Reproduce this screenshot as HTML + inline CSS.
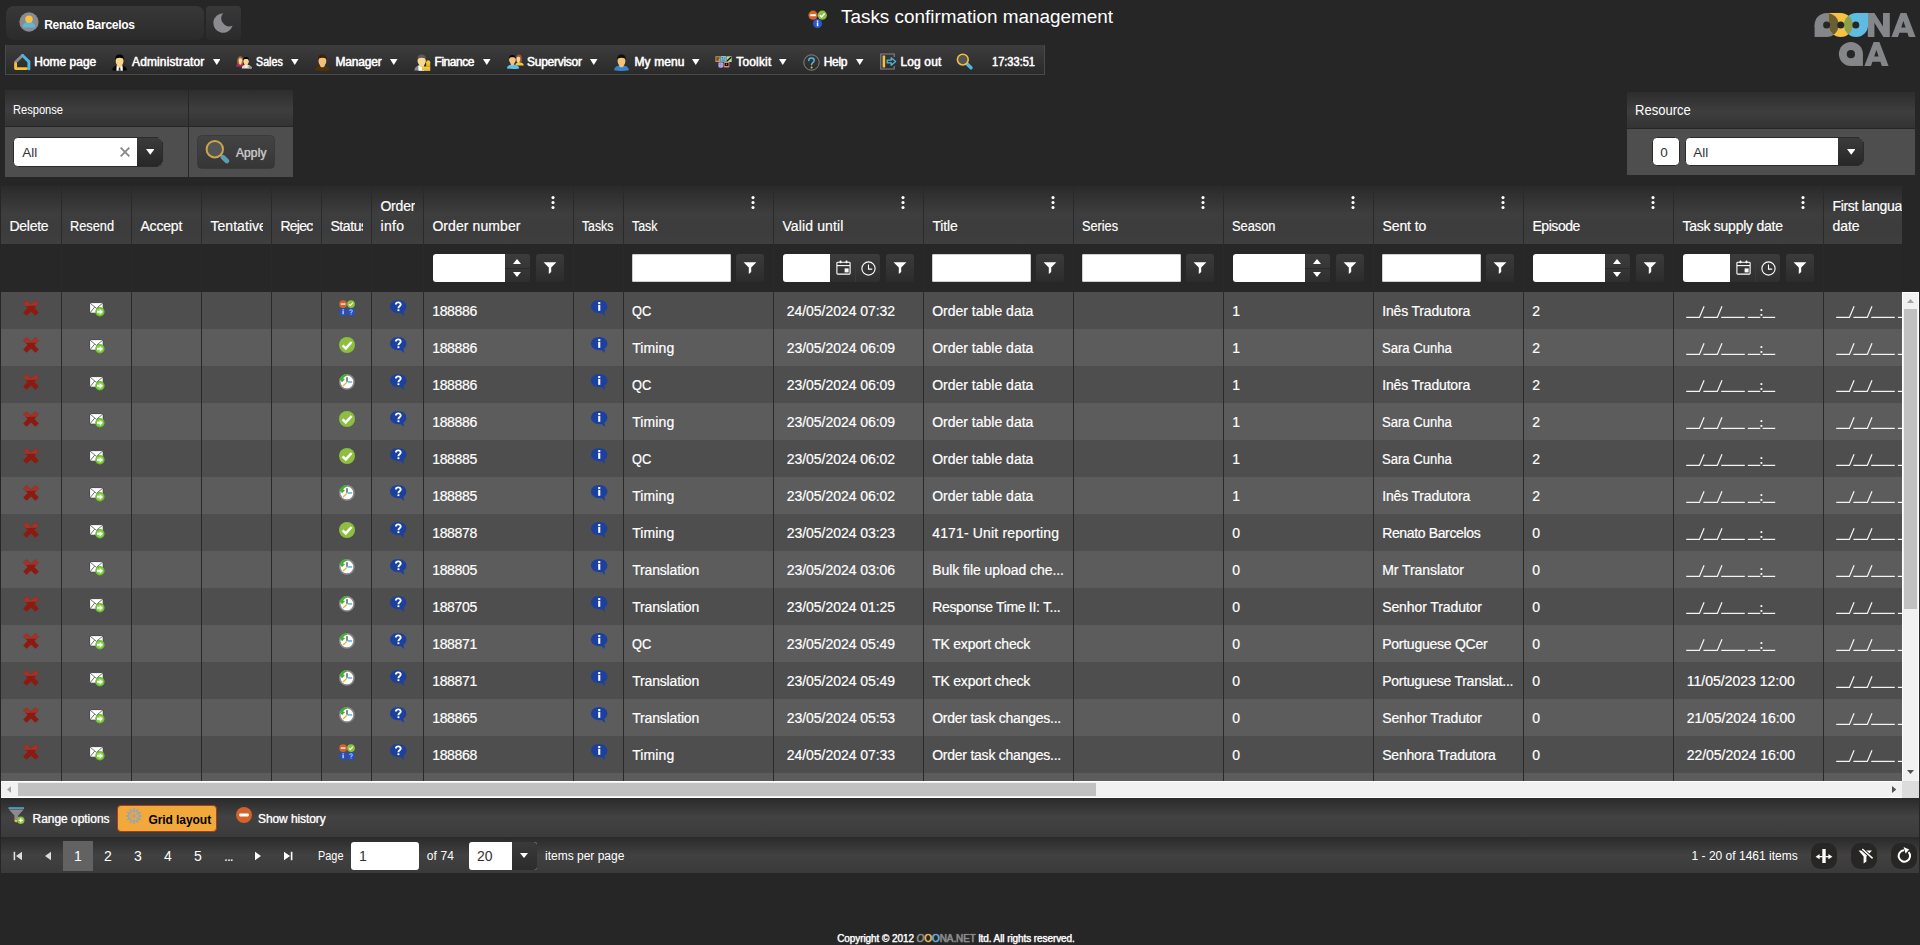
<!DOCTYPE html>
<html><head><meta charset="utf-8"><title>Tasks confirmation management</title>
<style>

*{box-sizing:border-box}
html,body{margin:0;padding:0}
body{width:1920px;height:945px;overflow:hidden;position:relative;background:#272626;color:#fff;font-family:"Liberation Sans",sans-serif;font-size:14px}
.abs{position:absolute}
svg{display:block}
.t{position:absolute;white-space:nowrap;line-height:1}
/* top */
#userbox{left:6px;top:6px;width:198px;height:34px;border-radius:8px;background:linear-gradient(#383838,#2b2b2b)}
#moonbox{left:206px;top:6px;width:35px;height:34px;border-radius:4px;background:linear-gradient(#383838,#2b2b2b)}
#menubar{left:5px;top:45px;width:1040px;height:30px;border:1px solid #4a4a4a;border-top-color:#3c3c3c;background:linear-gradient(#3c3c3c,#2a2a2a)}
#menubar .t{font-size:12px;top:10px;text-shadow:0 0 1px #fff}
#menubar .i{position:absolute}
/* panels */
.ph{position:absolute;background:linear-gradient(#2d2d2d 0%,#3e3e3e 55%,#333 100%)}
.pb{position:absolute;background:#4e4e4e}
.combo{position:absolute;height:29px;border-radius:4.5px;background:#fff;overflow:hidden;color:#333;border:1px solid #2b2b2b}
.combo .btn{position:absolute;right:0;top:0;bottom:0;background:linear-gradient(#3b3b3b,#272727)}
/* grid */
#grid{left:1px;top:186px;width:1918px;height:612px}
#ghead{left:0;top:0;width:1901px;height:58px;overflow:hidden;background:linear-gradient(#2a2a2a 0%,#3e3e3e 48%,#3c3c3c 75%,#3f3f3f 100%)}
#gfilter{left:0;top:58px;width:1901px;height:48px;background:#272727}
.hc{position:absolute;top:0;height:58px;border-left:1px solid #2a2a2a}
.fc{position:absolute;top:0;height:48px;border-left:1px solid #2a2a2a}
.hc .t{font-size:14px;-webkit-text-stroke:0.18px #fff}
.row{position:absolute;left:0;width:1901px;height:37px;background:#4e4e4e}
.row.alt{background:#5c5c5c}
.c{position:absolute;top:0;height:37px;border-left:1px solid #2a2a2a}
.c .t{top:11.5px;font-size:14px;color:#fff;-webkit-text-stroke:0.2px #fff}
.finp{position:absolute;top:10px;height:28px;background:#fff;border-radius:3px}
.finp.tx{border-radius:1px;border:1px solid #d0d0d0}
.fbtn{position:absolute;top:10px;width:28px;height:28px;border-radius:3px;background:linear-gradient(#3b3b3b,#2c2c2c)}
.fbtn svg{position:absolute;left:7px;top:7px}
.spin{position:absolute;top:10px;height:28px;background:linear-gradient(#3c3c3c,#2f2f2f);border-radius:0 3px 3px 0}

</style></head>
<body>
<div id="userbox" class="abs"></div>
<div class="abs" style="left:18.55px;top:11.5px;"><svg width="20" height="20" viewBox="0 0 20 20" ><circle cx="10" cy="10" r="9.65" fill="#8b8b8f"/>
<path d="M3.8 15.6 C3.8 12 6.4 10.3 8 10.3 L10 11.2 L12 10.3 C13.6 10.3 16.2 12 16.2 15.6 Z" fill="#5ab8e0"/>
<circle cx="10" cy="7.3" r="3.7" fill="#f8c440"/></svg></div>
<div class="t" style="left:44.2px;top:19px;font-size:12px;font-weight:bold;letter-spacing:-0.28px;">Renato Barcelos</div>
<div id="moonbox" class="abs"></div>
<div class="abs" style="left:212px;top:12px;"><svg width="22" height="22" viewBox="0 0 22 22" ><path d="M11.2 1.2 A9.8 9.8 0 1 0 20.6 13.6 A8 8 0 0 1 11.2 1.2 Z" fill="#8b8b90"/></svg></div>
<div class="abs" style="left:808px;top:10px;"><svg width="20" height="19" viewBox="0 0 20 19" ><circle cx="5" cy="5.2" r="4.6" fill="#d4622a"/><rect x="2.2" y="4.2" width="5.6" height="2" fill="#fff"/>
<circle cx="14.3" cy="5.2" r="4.6" fill="#8cc03f"/><path d="M11.9 5.3 l1.7 1.7 l3 -3.4" stroke="#fff" stroke-width="1.5" fill="none"/>
<circle cx="9.5" cy="13.6" r="4.6" fill="#2a56c6"/><rect x="8.8" y="12.4" width="1.5" height="3.8" fill="#fff"/><rect x="8.8" y="10.4" width="1.5" height="1.4" fill="#fff"/></svg></div>
<div class="t" style="left:841px;top:7.9px;font-size:18px;transform:scaleX(1.0498);transform-origin:0 0;">Tasks confirmation management</div>
<div class="abs" style="left:1814px;top:12px;"><svg width="106" height="58" viewBox="0 0 106 58" >
<defs><clipPath id="lg1"><circle cx="12.6" cy="12.95" r="12"/></clipPath><clipPath id="lg2"><circle cx="26.75" cy="12.95" r="12"/></clipPath></defs>
<g fill="#85868a">
<circle cx="12.6" cy="12.95" r="12"/><rect x="0.6" y="12.95" width="12" height="12"/>
<path d="M53.8 0.95 H60.4 L69 14.4 V0.95 H75.8 V24.95 H69.4 L60.4 10.8 V24.95 H53.8 Z"/>
<path d="M77.4 24.95 L86.6 0.95 H92.4 L101.6 24.95 H94.8 L93.4 20.8 H85.4 L84 24.95 Z M87.2 15.6 H91.6 L89.4 9 Z" fill-rule="evenodd"/>
<circle cx="36.9" cy="41.95" r="12"/><rect x="36.9" y="41.95" width="12" height="12"/>
<path d="M50.4 53.95 L59.6 29.95 H65.4 L74.6 53.95 H67.8 L66.4 49.8 H58.4 L57 53.95 Z M60.2 44.6 H64.6 L62.4 38 Z" fill-rule="evenodd"/>
</g>
<g fill="#f5c242"><circle cx="26.75" cy="12.95" r="12"/><rect x="14.75" y="0.95" width="12" height="12"/></g>
<g fill="#6b5e33" clip-path="url(#lg1)"><circle cx="26.75" cy="12.95" r="12"/><rect x="14.75" y="0.95" width="12" height="12"/></g>
<g fill="#5fbbe0"><circle cx="42.1" cy="12.95" r="12"/><rect x="42.1" y="0.95" width="12" height="12"/></g>
<circle cx="42.1" cy="12.95" r="12" fill="#8c9e4a" clip-path="url(#lg2)"/>
<circle cx="12.6" cy="12.95" r="3.5" fill="#272626"/>
<circle cx="26.75" cy="12.95" r="3.5" fill="#272626"/>
<circle cx="41.8" cy="12.95" r="3.5" fill="#272626"/>
<circle cx="36.9" cy="42.2" r="4.1" fill="#272626"/>
</svg></div>
<div id="menubar" class="abs"></div>
<div class="abs" style="left:13.5px;top:53.5px;"><svg width="17" height="17" viewBox="0 0 17 17" ><path d="M1.6 8 L8.6 1.4" stroke="#8b8b8f" stroke-width="2.9" fill="none" stroke-linecap="round"/>
<path d="M8.6 1.5 L14.9 7.6 V14.9" stroke="#4fb6e0" stroke-width="2.9" fill="none" stroke-linejoin="round" stroke-linecap="round"/>
<path d="M1.6 9.8 V14.6 H12.4" stroke="#f4c13f" stroke-width="2.9" fill="none" stroke-linejoin="round" stroke-linecap="round"/></svg></div>
<div class="t" style="left:34.25px;top:56px;font-size:12px;text-shadow:0 0 1px rgba(255,255,255,.8);-webkit-text-stroke:0.3px #fff;">Home page</div>
<div class="abs" style="left:112px;top:53.5px;"><svg width="16" height="17" viewBox="0 0 16 17" ><g transform="translate(0.0 0)">
<path d="M0.2 16.3 C0.4 13.4 2.4 12 5.2 11.5 H10 C12.8 12 14.8 13.4 15 16.3 C10 17.1 5 17.1 0.2 16.3 Z" fill="#050505"/>
<path d="M4.6 11.6 H10.6 L10.8 16.8 H4.4 Z" fill="#fff"/><path d="M7 13.2 h1.2 l0.5 3.6 h-2.2 z" fill="#333"/>
<path d="M4.2 8 C4.6 10.4 5.4 11.4 5.6 12.4 C6.6 13.6 8.6 13.6 9.6 12.4 C9.8 11.4 10.6 10.4 11 8 Z" fill="#f7d58b"/>
<ellipse cx="7.6" cy="7" rx="3.9" ry="4.2" fill="#f7d58b"/>
<path d="M3.5 6.2 C2.6 1.6 5.4 0.4 7.6 0.4 C9.8 0.4 12.6 1.6 11.7 6.2 C11.3 4.4 10.4 3.7 7.6 3.7 C4.8 3.7 3.9 4.4 3.5 6.2 Z" fill="#050505"/>
</g></svg></div>
<div class="t" style="left:132px;top:56px;font-size:12px;letter-spacing:0.13px;text-shadow:0 0 1px rgba(255,255,255,.8);-webkit-text-stroke:0.3px #fff;">Administrator</div>
<div class="abs" style="left:212.5px;top:59px;"><svg width="7.5" height="6" viewBox="0 0 7.5 6" ><path d="M0 0 H7.5 L3.75 6 Z" fill="#fff"/></svg></div>
<div class="abs" style="left:236px;top:55.6px;"><svg width="16" height="13" viewBox="0 0 16 13" >
<path d="M0 10.7 C0 8.4 1.6 7.6 4.2 7.6 C6.8 7.6 8 8.4 8 10.7 Z" fill="#a8285e"/>
<path d="M1.2 8.2 C0.6 2.4 2.4 0.2 4.4 0.2 C6.6 0.2 7.8 2.6 7 8.2 Z" fill="#a0603a"/>
<path d="M2.6 3.8 C2.6 1.6 6.2 1.6 6.2 4 C6.2 6 5.4 7 5.2 8.2 C4.8 8.8 3.8 8.8 3.4 8.2 C3.2 7 2.6 6 2.6 3.8 Z" fill="#fbd88e"/>
<path d="M5.8 12.5 C5.8 10 7.4 8.8 10.2 8.8 C13 8.8 15.8 10 15.8 12.5 Z" fill="#dcdcdc"/>
<path d="M8.8 9 L10.1 12.5 L11.4 9 Z" fill="#fff"/><path d="M12.6 10 h2.4 v2.5 h-2.4 z" fill="#9a9a9a"/>
<path d="M7.6 5 C7.6 7 8.4 8 8.6 9 C9.2 10 11 10 11.6 9 C11.8 8 12.6 7 12.6 5 Z" fill="#fbd88e"/>
<ellipse cx="10.1" cy="4.9" rx="2.6" ry="2.7" fill="#fbd88e"/>
<path d="M7.4 4.6 C6.8 1.8 8.6 1.1 10.1 1.1 C11.6 1.1 13.4 1.8 12.8 4.6 C12.4 3.4 11.8 3 10.1 3 C8.4 3 7.8 3.4 7.4 4.6 Z" fill="#050505"/></svg></div>
<div class="t" style="left:256.25px;top:56px;font-size:12px;transform:scaleX(0.8912);transform-origin:0 0;text-shadow:0 0 1px rgba(255,255,255,.8);-webkit-text-stroke:0.3px #fff;">Sales</div>
<div class="abs" style="left:291.25px;top:59px;"><svg width="7.5" height="6" viewBox="0 0 7.5 6" ><path d="M0 0 H7.5 L3.75 6 Z" fill="#fff"/></svg></div>
<div class="abs" style="left:315px;top:53.6px;"><svg width="16" height="17" viewBox="0 0 16 17" ><g transform="translate(-0.1999999999999993 0)">
<path d="M0.2 16.3 C0.4 13.4 2.4 12 5.2 11.5 H10 C12.8 12 14.8 13.4 15 16.3 C10 17.1 5 17.1 0.2 16.3 Z" fill="#4e3208"/>

<path d="M4.2 8 C4.6 10.4 5.4 11.4 5.6 12.4 C6.6 13.6 8.6 13.6 9.6 12.4 C9.8 11.4 10.6 10.4 11 8 Z" fill="#f3c07a"/>
<ellipse cx="7.6" cy="7" rx="3.9" ry="4.2" fill="#f3c07a"/>
<path d="M3.5 6.2 C2.6 1.6 5.4 0.4 7.6 0.4 C9.8 0.4 12.6 1.6 11.7 6.2 C11.3 4.4 10.4 3.7 7.6 3.7 C4.8 3.7 3.9 4.4 3.5 6.2 Z" fill="#3a2008"/>
</g></svg></div>
<div class="t" style="left:335.5px;top:56px;font-size:12px;letter-spacing:-0.18px;text-shadow:0 0 1px rgba(255,255,255,.8);-webkit-text-stroke:0.3px #fff;">Manager</div>
<div class="abs" style="left:390px;top:59px;"><svg width="7.5" height="6" viewBox="0 0 7.5 6" ><path d="M0 0 H7.5 L3.75 6 Z" fill="#fff"/></svg></div>
<div class="abs" style="left:414px;top:53.6px;"><svg width="17" height="17" viewBox="0 0 17 17" >
<path d="M0.4 16.4 C0.6 13.4 2.4 12 5.2 11.5 H10 L10 16.8 Z" fill="#8a8a8a"/>
<path d="M4.2 11.6 H10 V16.8 H4.6 Z" fill="#fff"/>
<path d="M4.3 8 C4.7 10.4 5.5 11.4 5.7 12.4 C6.7 13.6 8.7 13.6 9.7 12.4 C9.9 11.4 10.7 10.4 11.1 8 Z" fill="#f9d890"/>
<ellipse cx="7.7" cy="7" rx="4.2" ry="4.2" fill="#f9d890"/>
<path d="M3.6 6.2 C2.7 1.6 5.5 0.4 7.7 0.4 C9.9 0.4 12.7 1.6 11.8 6.2 C11.4 4.4 10.5 3.7 7.7 3.7 C4.9 3.7 4 4.4 3.6 6.2 Z" fill="#5a5a52"/>
<rect x="8" y="12.4" width="8.2" height="4.2" fill="#e8b830"/>
<rect x="8" y="13.3" width="8.2" height="0.5" fill="#f8dc70"/><rect x="8" y="14.7" width="8.2" height="0.5" fill="#f8dc70"/><rect x="8" y="16" width="8.2" height="0.5" fill="#f8dc70"/>
<rect x="12.2" y="8.4" width="4" height="4.2" fill="#e8b830"/><circle cx="14.2" cy="8.2" r="2" fill="#f0c438"/></svg></div>
<div class="t" style="left:434.5px;top:56px;font-size:12px;letter-spacing:-0.45px;text-shadow:0 0 1px rgba(255,255,255,.8);-webkit-text-stroke:0.3px #fff;">Finance</div>
<div class="abs" style="left:483px;top:59px;"><svg width="7.5" height="6" viewBox="0 0 7.5 6" ><path d="M0 0 H7.5 L3.75 6 Z" fill="#fff"/></svg></div>
<div class="abs" style="left:507px;top:54.4px;"><svg width="17" height="15" viewBox="0 0 17 15" >
<path d="M8.4 11.4 C8.4 9 10.2 8.2 12.2 8.2 C14.4 8.2 16.6 9.4 16.8 11.4 Z" fill="#f5c83a"/>
<path d="M8.8 8 C8 2.6 10 0.4 12 0.4 C14.2 0.4 15.4 3 14.6 8 Z" fill="#a0583a"/>
<path d="M9.6 4.4 C9.6 2.2 13.2 2.2 13.2 4.6 C13.2 6.4 12.6 7.4 12.4 8.4 C12 9 10.8 9 10.4 8.4 C10.2 7.4 9.6 6.4 9.6 4.4 Z" fill="#fbd89a"/>
<path d="M0 14.4 C0 11.8 1.8 10.8 5.4 10.6 C9 10.8 12.2 11.8 12.2 14.4 C8 15.1 4 15.1 0 14.4 Z" fill="#5ac0f0"/>
<path d="M2.4 5.6 C2.6 8.4 3.6 9.4 3.8 10.6 C4.4 11.8 6.4 11.8 7 10.6 C7.2 9.4 8.2 8.4 8.4 5.6 Z" fill="#f5c27a"/>
<ellipse cx="5.4" cy="5.6" rx="3.3" ry="3.5" fill="#f5c27a"/>
<path d="M2.2 5 C1.6 1.8 3.8 1 5.4 1 C7 1 9.2 1.8 8.6 5 C8.2 3.6 7.4 3.2 5.4 3.2 C3.4 3.2 2.6 3.6 2.2 5 Z" fill="#0a0806"/></svg></div>
<div class="t" style="left:527px;top:56px;font-size:12px;letter-spacing:-0.26px;text-shadow:0 0 1px rgba(255,255,255,.8);-webkit-text-stroke:0.3px #fff;">Supervisor</div>
<div class="abs" style="left:590px;top:59px;"><svg width="7.5" height="6" viewBox="0 0 7.5 6" ><path d="M0 0 H7.5 L3.75 6 Z" fill="#fff"/></svg></div>
<div class="abs" style="left:614px;top:53.6px;"><svg width="16" height="17" viewBox="0 0 16 17" ><g transform="translate(-0.09999999999999964 0)">
<path d="M0.2 16.3 C0.4 13.4 2.4 12 5.2 11.5 H10 C12.8 12 14.8 13.4 15 16.3 C10 17.1 5 17.1 0.2 16.3 Z" fill="#3a82d0"/>

<path d="M4.2 8 C4.6 10.4 5.4 11.4 5.6 12.4 C6.6 13.6 8.6 13.6 9.6 12.4 C9.8 11.4 10.6 10.4 11 8 Z" fill="#f5c27a"/>
<ellipse cx="7.6" cy="7" rx="3.9" ry="4.2" fill="#f5c27a"/>
<path d="M3.5 6.2 C2.6 1.6 5.4 0.4 7.6 0.4 C9.8 0.4 12.6 1.6 11.7 6.2 C11.3 4.4 10.4 3.7 7.6 3.7 C4.8 3.7 3.9 4.4 3.5 6.2 Z" fill="#120c06"/>
</g></svg></div>
<div class="t" style="left:634.5px;top:56px;font-size:12px;letter-spacing:0.11px;text-shadow:0 0 1px rgba(255,255,255,.8);-webkit-text-stroke:0.3px #fff;">My menu</div>
<div class="abs" style="left:692px;top:59px;"><svg width="7.5" height="6" viewBox="0 0 7.5 6" ><path d="M0 0 H7.5 L3.75 6 Z" fill="#fff"/></svg></div>
<div class="abs" style="left:715.3px;top:56px;"><svg width="17" height="12" viewBox="0 0 17 12" >
<rect x="0.4" y="0.2" width="5.2" height="5.8" rx="0.6" fill="#c89860"/><path d="M1.4 1.2 h3.2 v1.4 h-1 v2.2 h-2.2 z" fill="#6a4a2a"/>
<rect x="5.7" y="0" width="5.4" height="5.8" rx="0.6" fill="#7ac8e0"/><rect x="6.6" y="1.2" width="1.6" height="1.2" fill="#3a6a80"/><rect x="9" y="1.6" width="1.4" height="0.8" fill="#3a6a80"/><rect x="6.6" y="3.6" width="3.6" height="0.9" fill="#3a6a80"/>
<rect x="11.4" y="0.2" width="5.3" height="5.8" rx="0.6" fill="#b8d890"/><path d="M12.4 4.8 L15.8 1.4" stroke="#111" stroke-width="1.4" stroke-linecap="round"/>
<rect x="3.1" y="6" width="5.4" height="5.9" rx="1.8" fill="#9080c0"/><circle cx="4.8" cy="7.8" r="0.9" fill="#c0b4e0"/><circle cx="6.9" cy="7.8" r="0.9" fill="#c0b4e0"/><circle cx="4.8" cy="10" r="0.9" fill="#c0b4e0"/><circle cx="6.9" cy="10" r="0.9" fill="#c0b4e0"/>
<rect x="8.7" y="6" width="5.7" height="5.4" rx="0.8" fill="#d88880"/><rect x="9.6" y="7" width="3.9" height="2.9" fill="#0a0a0a"/><circle cx="11.5" cy="8.2" r="0.6" fill="#d88880"/></svg></div>
<div class="t" style="left:736.25px;top:56px;font-size:12px;letter-spacing:0.16px;text-shadow:0 0 1px rgba(255,255,255,.8);-webkit-text-stroke:0.3px #fff;">Toolkit</div>
<div class="abs" style="left:779.25px;top:59px;"><svg width="7.5" height="6" viewBox="0 0 7.5 6" ><path d="M0 0 H7.5 L3.75 6 Z" fill="#fff"/></svg></div>
<div class="abs" style="left:802.5px;top:53.5px;"><svg width="17" height="17" viewBox="0 0 17 17" ><circle cx="8.5" cy="8.5" r="7.7" fill="none" stroke="#8c8c90" stroke-width="0.9"/>
<path d="M5.8 6.4 C5.8 3.2 11.2 3.2 11.2 6.4 C11.2 8.4 8.6 8.4 8.6 10.8" stroke="#4fb6e0" stroke-width="1.5" fill="none" stroke-linecap="round"/>
<circle cx="8.6" cy="13.6" r="1" fill="#f4c13f"/></svg></div>
<div class="t" style="left:823.75px;top:56px;font-size:12px;letter-spacing:-0.31px;text-shadow:0 0 1px rgba(255,255,255,.8);-webkit-text-stroke:0.3px #fff;">Help</div>
<div class="abs" style="left:856.25px;top:59px;"><svg width="7.5" height="6" viewBox="0 0 7.5 6" ><path d="M0 0 H7.5 L3.75 6 Z" fill="#fff"/></svg></div>
<div class="abs" style="left:880px;top:53px;"><svg width="17" height="17" viewBox="0 0 17 17" ><path d="M14.2 4 V1 H0.8 V16 H14.2 V13" stroke="#85858a" stroke-width="1.1" fill="none"/>
<rect x="2.6" y="2.4" width="2.6" height="12.2" rx="0.6" fill="#f4c13f"/>
<path d="M7.2 7.2 H11.2 V4.8 L15.6 8.5 L11.2 12.2 V9.8 H7.2 Z" fill="none" stroke="#4fb6e0" stroke-width="1.3" stroke-linejoin="round"/></svg></div>
<div class="t" style="left:900.5px;top:56px;font-size:12px;letter-spacing:0.12px;text-shadow:0 0 1px rgba(255,255,255,.8);-webkit-text-stroke:0.3px #fff;">Log out</div>
<div class="abs" style="left:956px;top:52.9px;"><svg width="18" height="18" viewBox="0 0 18 18" ><path d="M11.4 11.2 L15 14.8" stroke="#4fb6e0" stroke-width="3.4" stroke-linecap="round"/>
<circle cx="6.8" cy="6.6" r="5.4" fill="#555" stroke="#f2bf3c" stroke-width="1.6"/></svg></div>
<div class="t" style="left:991.7px;top:56px;font-size:12px;transform:scaleX(0.9206);transform-origin:0 0;text-shadow:0 0 1px rgba(255,255,255,.8);-webkit-text-stroke:0.3px #fff;">17:33:51</div>
<div class="ph" style="left:5px;top:90px;width:183px;height:36px"></div>
<div class="ph" style="left:189px;top:90px;width:104px;height:36px"></div>
<div class="pb" style="left:5px;top:127px;width:183px;height:50px"></div>
<div class="pb" style="left:189px;top:127px;width:104px;height:50px"></div>
<div class="t" style="left:13.4px;top:104px;font-size:12px;transform:scaleX(0.9254);transform-origin:0 0;">Response</div>
<div class="combo" style="left:13.4px;top:137.3px;width:149.5px;height:29.4px"><div class="btn" style="width:25px"></div></div>
<div class="t" style="left:22.3px;top:145.6px;font-size:13.5px;color:#333;">All</div>
<div class="abs" style="left:120.1px;top:147px;"><svg width="10" height="10" viewBox="0 0 10 10" ><path d="M0.6 0.6 L9.4 9.4 M9.4 0.6 L0.6 9.4" stroke="#8a8a8a" stroke-width="1.9"/></svg></div>
<div class="abs" style="left:145.7px;top:149.2px;"><svg width="8.5" height="5.8" viewBox="0 0 8.5 5.8" ><path d="M0 0 H8.5 L4.25 5.8 Z" fill="#fff"/></svg></div>
<div class="abs" style="left:197px;top:135px;width:78px;height:34px;border-radius:4.5px;border:1px solid #3a3a3a;background:linear-gradient(#434343,#363636)"></div>
<div class="abs" style="left:205px;top:140px;"><svg width="26" height="26" viewBox="0 0 26 26" ><path d="M15 14.6 L18 17.4" stroke="#7a8a92" stroke-width="2.4"/><path d="M18 17.2 L21.9 20.9" stroke="#5b9db8" stroke-width="4.8" stroke-linecap="round"/>
<circle cx="9.8" cy="9.2" r="8.2" fill="#555" stroke="#c9a64a" stroke-width="2"/></svg></div>
<div class="t" style="left:235.9px;top:147px;font-size:12px;letter-spacing:0.15px;color:#c8c8c8;text-shadow:0 0 1px rgba(200,200,200,.7);-webkit-text-stroke:0.2px #c8c8c8;">Apply</div>
<div class="ph" style="left:1627px;top:92px;width:288px;height:36px"></div>
<div class="pb" style="left:1627px;top:129px;width:288px;height:46px"></div>
<div class="t" style="left:1635.3px;top:103px;font-size:14px;transform:scaleX(0.9313);transform-origin:0 0;">Resource</div>
<div class="combo" style="left:1651.7px;top:137.4px;width:28.6px"></div>
<div class="t" style="left:1660.2px;top:145.6px;font-size:13.5px;color:#333;">0</div>
<div class="combo" style="left:1684.6px;top:137.4px;width:179px"><div class="btn" style="width:25px"></div></div>
<div class="t" style="left:1693.2px;top:145.6px;font-size:13.5px;color:#333;">All</div>
<div class="abs" style="left:1846.6px;top:149.2px;"><svg width="8.5" height="5.8" viewBox="0 0 8.5 5.8" ><path d="M0 0 H8.5 L4.25 5.8 Z" fill="#fff"/></svg></div>
<div id="grid" class="abs">
<div id="ghead" class="abs">
<div class="hc" style="left:0px;width:60px;border-left:none;"><div class="abs" style="left:0;top:0;width:52px;height:58px;overflow:hidden"><div class="t" style="left:8.4px;top:33px;letter-spacing:-0.25px;">Delete</div></div></div>
<div class="hc" style="left:60px;width:70px;"><div class="abs" style="left:0;top:0;width:61px;height:58px;overflow:hidden"><div class="t" style="left:8.4px;top:33px;transform:scaleX(0.9119);transform-origin:0 0;">Resend</div></div></div>
<div class="hc" style="left:130px;width:70px;"><div class="abs" style="left:0;top:0;width:61px;height:58px;overflow:hidden"><div class="t" style="left:8.4px;top:33px;letter-spacing:-0.16px;">Accept</div></div></div>
<div class="hc" style="left:200px;width:70px;"><div class="abs" style="left:0;top:0;width:61px;height:58px;overflow:hidden"><div class="t" style="left:8.4px;top:33px;letter-spacing:0.06px;">Tentative</div></div></div>
<div class="hc" style="left:270px;width:50px;"><div class="abs" style="left:0;top:0;width:41px;height:58px;overflow:hidden"><div class="t" style="left:8.4px;top:33px;letter-spacing:-0.75px;">Rejected</div></div></div>
<div class="hc" style="left:320px;width:50px;"><div class="abs" style="left:0;top:0;width:41px;height:58px;overflow:hidden"><div class="t" style="left:8.4px;top:33px;letter-spacing:-0.4px;">Status</div></div></div>
<div class="hc" style="left:370px;width:52px;"><div class="abs" style="left:0;top:0;width:43px;height:58px;overflow:hidden"><div class="t" style="left:8.4px;top:13px;letter-spacing:-0.20px;">Order</div><div class="t" style="left:8.4px;top:33px;letter-spacing:0.38px;">info</div></div></div>
<div class="hc" style="left:422px;width:150px;"><div class="abs" style="left:0;top:0;width:141px;height:58px;overflow:hidden"><div class="t" style="left:8.4px;top:33px;letter-spacing:0.08px;">Order number</div></div><div class="abs" style="left:127.1px;top:9.9px"><svg width="4" height="13.2" viewBox="0 0 4 13.2" ><circle cx="2" cy="1.6" r="1.55" fill="#fff"/><circle cx="2" cy="6.55" r="1.55" fill="#fff"/><circle cx="2" cy="11.5" r="1.55" fill="#fff"/></svg></div></div>
<div class="hc" style="left:572px;width:50px;"><div class="abs" style="left:0;top:0;width:41px;height:58px;overflow:hidden"><div class="t" style="left:8.4px;top:33px;transform:scaleX(0.8747);transform-origin:0 0;">Tasks</div></div></div>
<div class="hc" style="left:622px;width:150px;"><div class="abs" style="left:0;top:0;width:141px;height:58px;overflow:hidden"><div class="t" style="left:8.4px;top:33px;transform:scaleX(0.8859);transform-origin:0 0;">Task</div></div><div class="abs" style="left:127.1px;top:9.9px"><svg width="4" height="13.2" viewBox="0 0 4 13.2" ><circle cx="2" cy="1.6" r="1.55" fill="#fff"/><circle cx="2" cy="6.55" r="1.55" fill="#fff"/><circle cx="2" cy="11.5" r="1.55" fill="#fff"/></svg></div></div>
<div class="hc" style="left:772px;width:150px;"><div class="abs" style="left:0;top:0;width:141px;height:58px;overflow:hidden"><div class="t" style="left:8.4px;top:33px;letter-spacing:0.13px;">Valid until</div></div><div class="abs" style="left:127.1px;top:9.9px"><svg width="4" height="13.2" viewBox="0 0 4 13.2" ><circle cx="2" cy="1.6" r="1.55" fill="#fff"/><circle cx="2" cy="6.55" r="1.55" fill="#fff"/><circle cx="2" cy="11.5" r="1.55" fill="#fff"/></svg></div></div>
<div class="hc" style="left:922px;width:150px;"><div class="abs" style="left:0;top:0;width:141px;height:58px;overflow:hidden"><div class="t" style="left:8.4px;top:33px;letter-spacing:-0.11px;">Title</div></div><div class="abs" style="left:127.1px;top:9.9px"><svg width="4" height="13.2" viewBox="0 0 4 13.2" ><circle cx="2" cy="1.6" r="1.55" fill="#fff"/><circle cx="2" cy="6.55" r="1.55" fill="#fff"/><circle cx="2" cy="11.5" r="1.55" fill="#fff"/></svg></div></div>
<div class="hc" style="left:1072px;width:150px;"><div class="abs" style="left:0;top:0;width:141px;height:58px;overflow:hidden"><div class="t" style="left:8.4px;top:33px;transform:scaleX(0.9072);transform-origin:0 0;">Series</div></div><div class="abs" style="left:127.1px;top:9.9px"><svg width="4" height="13.2" viewBox="0 0 4 13.2" ><circle cx="2" cy="1.6" r="1.55" fill="#fff"/><circle cx="2" cy="6.55" r="1.55" fill="#fff"/><circle cx="2" cy="11.5" r="1.55" fill="#fff"/></svg></div></div>
<div class="hc" style="left:1222px;width:150px;"><div class="abs" style="left:0;top:0;width:141px;height:58px;overflow:hidden"><div class="t" style="left:8.4px;top:33px;transform:scaleX(0.9162);transform-origin:0 0;">Season</div></div><div class="abs" style="left:127.1px;top:9.9px"><svg width="4" height="13.2" viewBox="0 0 4 13.2" ><circle cx="2" cy="1.6" r="1.55" fill="#fff"/><circle cx="2" cy="6.55" r="1.55" fill="#fff"/><circle cx="2" cy="11.5" r="1.55" fill="#fff"/></svg></div></div>
<div class="hc" style="left:1372px;width:150px;"><div class="abs" style="left:0;top:0;width:141px;height:58px;overflow:hidden"><div class="t" style="left:8.4px;top:33px;letter-spacing:-0.06px;">Sent to</div></div><div class="abs" style="left:127.1px;top:9.9px"><svg width="4" height="13.2" viewBox="0 0 4 13.2" ><circle cx="2" cy="1.6" r="1.55" fill="#fff"/><circle cx="2" cy="6.55" r="1.55" fill="#fff"/><circle cx="2" cy="11.5" r="1.55" fill="#fff"/></svg></div></div>
<div class="hc" style="left:1522px;width:150px;"><div class="abs" style="left:0;top:0;width:141px;height:58px;overflow:hidden"><div class="t" style="left:8.4px;top:33px;letter-spacing:-0.43px;">Episode</div></div><div class="abs" style="left:127.1px;top:9.9px"><svg width="4" height="13.2" viewBox="0 0 4 13.2" ><circle cx="2" cy="1.6" r="1.55" fill="#fff"/><circle cx="2" cy="6.55" r="1.55" fill="#fff"/><circle cx="2" cy="11.5" r="1.55" fill="#fff"/></svg></div></div>
<div class="hc" style="left:1672px;width:150px;"><div class="abs" style="left:0;top:0;width:141px;height:58px;overflow:hidden"><div class="t" style="left:8.4px;top:33px;letter-spacing:-0.25px;">Task supply date</div></div><div class="abs" style="left:127.1px;top:9.9px"><svg width="4" height="13.2" viewBox="0 0 4 13.2" ><circle cx="2" cy="1.6" r="1.55" fill="#fff"/><circle cx="2" cy="6.55" r="1.55" fill="#fff"/><circle cx="2" cy="11.5" r="1.55" fill="#fff"/></svg></div></div>
<div class="hc" style="left:1822px;width:150px;"><div class="abs" style="left:0;top:0;width:141px;height:58px;overflow:hidden"><div class="t" style="left:8.4px;top:13px;letter-spacing:-0.3px;">First language</div><div class="t" style="left:8.4px;top:33px;">date</div></div></div>
</div>
<div id="gfilter" class="abs">
<div class="fc" style="left:0px;width:60px;border-left:none;"></div>
<div class="fc" style="left:60px;width:70px;"></div>
<div class="fc" style="left:130px;width:70px;"></div>
<div class="fc" style="left:200px;width:70px;"></div>
<div class="fc" style="left:270px;width:50px;"></div>
<div class="fc" style="left:320px;width:50px;"></div>
<div class="fc" style="left:370px;width:52px;"></div>
<div class="fc" style="left:422px;width:150px;"><div class="finp" style="left:9px;width:73px;border-radius:3px 0 0 3px"></div><div class="spin" style="left:81px;width:25px"><div class="abs" style="left:8px;top:5px"><svg width="8" height="5" viewBox="0 0 8 5" ><path d="M0 5 H8 L4.0 0 Z" fill="#fff"/></svg></div><div class="abs" style="left:8px;top:18px"><svg width="8" height="5" viewBox="0 0 8 5" ><path d="M0 0 H8 L4.0 5 Z" fill="#fff"/></svg></div><div class="abs" style="left:0;top:13.5px;width:25px;height:1px;background:#2a2a2a"></div></div><div class="fbtn" style="left:112px"><svg width="14" height="14" viewBox="0 0 14 14" ><path d="M0.6 1.2 H13.4 L8.2 6.6 V11 L5.8 13 V6.6 Z" fill="#fff"/></svg></div></div>
<div class="fc" style="left:572px;width:50px;"></div>
<div class="fc" style="left:622px;width:150px;"><div class="finp tx" style="left:8px;width:99px"></div><div class="fbtn" style="left:112px"><svg width="14" height="14" viewBox="0 0 14 14" ><path d="M0.6 1.2 H13.4 L8.2 6.6 V11 L5.8 13 V6.6 Z" fill="#fff"/></svg></div></div>
<div class="fc" style="left:772px;width:150px;"><div class="finp" style="left:9px;width:48px;border-radius:3px 0 0 3px"></div><div class="spin" style="left:56px;width:50px"><div class="abs" style="left:5.7px;top:6px"><svg width="15" height="15" viewBox="0 0 15 15" ><rect x="0.9" y="2.3" width="13.2" height="11.8" rx="0.8" fill="none" stroke="#fff" stroke-width="1.1"/><path d="M0.9 5.6 H14.1" stroke="#fff" stroke-width="1.1"/>
<rect x="3.6" y="0.6" width="1.8" height="2.6" rx="0.6" fill="#fff"/><rect x="9.6" y="0.6" width="1.8" height="2.6" rx="0.6" fill="#fff"/><rect x="8.6" y="8.4" width="4" height="4" fill="#fff"/></svg></div><div class="abs" style="left:30.7px;top:6.8px"><svg width="15" height="15" viewBox="0 0 15 15" ><circle cx="7.5" cy="7.5" r="6.6" fill="none" stroke="#fff" stroke-width="1.1"/><path d="M7.5 3.6 V8.1 H11.2" stroke="#fff" stroke-width="1.1" fill="none"/></svg></div><div class="abs" style="left:24.5px;top:0;width:1px;height:28px;background:#3a3a3a"></div></div><div class="fbtn" style="left:112px"><svg width="14" height="14" viewBox="0 0 14 14" ><path d="M0.6 1.2 H13.4 L8.2 6.6 V11 L5.8 13 V6.6 Z" fill="#fff"/></svg></div></div>
<div class="fc" style="left:922px;width:150px;"><div class="finp tx" style="left:8px;width:99px"></div><div class="fbtn" style="left:112px"><svg width="14" height="14" viewBox="0 0 14 14" ><path d="M0.6 1.2 H13.4 L8.2 6.6 V11 L5.8 13 V6.6 Z" fill="#fff"/></svg></div></div>
<div class="fc" style="left:1072px;width:150px;"><div class="finp tx" style="left:8px;width:99px"></div><div class="fbtn" style="left:112px"><svg width="14" height="14" viewBox="0 0 14 14" ><path d="M0.6 1.2 H13.4 L8.2 6.6 V11 L5.8 13 V6.6 Z" fill="#fff"/></svg></div></div>
<div class="fc" style="left:1222px;width:150px;"><div class="finp" style="left:9px;width:73px;border-radius:3px 0 0 3px"></div><div class="spin" style="left:81px;width:25px"><div class="abs" style="left:8px;top:5px"><svg width="8" height="5" viewBox="0 0 8 5" ><path d="M0 5 H8 L4.0 0 Z" fill="#fff"/></svg></div><div class="abs" style="left:8px;top:18px"><svg width="8" height="5" viewBox="0 0 8 5" ><path d="M0 0 H8 L4.0 5 Z" fill="#fff"/></svg></div><div class="abs" style="left:0;top:13.5px;width:25px;height:1px;background:#2a2a2a"></div></div><div class="fbtn" style="left:112px"><svg width="14" height="14" viewBox="0 0 14 14" ><path d="M0.6 1.2 H13.4 L8.2 6.6 V11 L5.8 13 V6.6 Z" fill="#fff"/></svg></div></div>
<div class="fc" style="left:1372px;width:150px;"><div class="finp tx" style="left:8px;width:99px"></div><div class="fbtn" style="left:112px"><svg width="14" height="14" viewBox="0 0 14 14" ><path d="M0.6 1.2 H13.4 L8.2 6.6 V11 L5.8 13 V6.6 Z" fill="#fff"/></svg></div></div>
<div class="fc" style="left:1522px;width:150px;"><div class="finp" style="left:9px;width:73px;border-radius:3px 0 0 3px"></div><div class="spin" style="left:81px;width:25px"><div class="abs" style="left:8px;top:5px"><svg width="8" height="5" viewBox="0 0 8 5" ><path d="M0 5 H8 L4.0 0 Z" fill="#fff"/></svg></div><div class="abs" style="left:8px;top:18px"><svg width="8" height="5" viewBox="0 0 8 5" ><path d="M0 0 H8 L4.0 5 Z" fill="#fff"/></svg></div><div class="abs" style="left:0;top:13.5px;width:25px;height:1px;background:#2a2a2a"></div></div><div class="fbtn" style="left:112px"><svg width="14" height="14" viewBox="0 0 14 14" ><path d="M0.6 1.2 H13.4 L8.2 6.6 V11 L5.8 13 V6.6 Z" fill="#fff"/></svg></div></div>
<div class="fc" style="left:1672px;width:150px;"><div class="finp" style="left:9px;width:48px;border-radius:3px 0 0 3px"></div><div class="spin" style="left:56px;width:50px"><div class="abs" style="left:5.7px;top:6px"><svg width="15" height="15" viewBox="0 0 15 15" ><rect x="0.9" y="2.3" width="13.2" height="11.8" rx="0.8" fill="none" stroke="#fff" stroke-width="1.1"/><path d="M0.9 5.6 H14.1" stroke="#fff" stroke-width="1.1"/>
<rect x="3.6" y="0.6" width="1.8" height="2.6" rx="0.6" fill="#fff"/><rect x="9.6" y="0.6" width="1.8" height="2.6" rx="0.6" fill="#fff"/><rect x="8.6" y="8.4" width="4" height="4" fill="#fff"/></svg></div><div class="abs" style="left:30.7px;top:6.8px"><svg width="15" height="15" viewBox="0 0 15 15" ><circle cx="7.5" cy="7.5" r="6.6" fill="none" stroke="#fff" stroke-width="1.1"/><path d="M7.5 3.6 V8.1 H11.2" stroke="#fff" stroke-width="1.1" fill="none"/></svg></div><div class="abs" style="left:24.5px;top:0;width:1px;height:28px;background:#3a3a3a"></div></div><div class="fbtn" style="left:112px"><svg width="14" height="14" viewBox="0 0 14 14" ><path d="M0.6 1.2 H13.4 L8.2 6.6 V11 L5.8 13 V6.6 Z" fill="#fff"/></svg></div></div>
<div class="fc" style="left:1822px;width:150px;"></div>
</div>
<div class="abs" style="left:0;top:106px;width:1901px;height:489px;overflow:hidden">
<div class="row" style="top:0px">
<div class="c" style="left:0px;width:60px;border-left:none;overflow:hidden"><div class="abs" style="left:22px;top:8px"><svg width="16" height="16" viewBox="0 0 16 16" ><path d="M3.6 0.2 L8 4.6 L12.4 0.2 L15.8 3.6 L11.4 8 L15.8 12.4 L12.4 15.8 L8 11.4 L3.6 15.8 L0.2 12.4 L4.6 8 L0.2 3.6 Z" fill="#8c1a10"/>
<path d="M3.6 0.2 L8 4.6 L12.4 0.2 L15.8 3.6 L13.4 6 C9 5.4 5.5 6.4 2.4 5.8 L0.2 3.6 Z" fill="#a0342a"/></svg></div></div>
<div class="c" style="left:60px;width:70px;overflow:hidden"><div class="abs" style="left:27px;top:10px"><svg width="16" height="15" viewBox="0 0 16 15" ><rect x="0.6" y="0.6" width="13.6" height="10.6" rx="1.4" fill="#fff" stroke="#3a3a3a" stroke-width="0.9"/>
<path d="M1.2 1.2 L7.4 6.4 L13.6 1.2 M1.2 10.6 L5.6 5.2 M13.6 10.6 L9.2 5.2" stroke="#333" stroke-width="0.7" fill="none"/>
<circle cx="10.9" cy="9.8" r="4.7" fill="#6cc12e"/><circle cx="10.9" cy="9.8" r="3.3" fill="#8ed552"/>
<path d="M8 8.8 H10.8 V7.2 L14 9.8 L10.8 12.4 V10.8 H8 Z" fill="#fff"/></svg></div></div>
<div class="c" style="left:130px;width:70px;overflow:hidden"></div>
<div class="c" style="left:200px;width:70px;overflow:hidden"></div>
<div class="c" style="left:270px;width:50px;overflow:hidden"></div>
<div class="c" style="left:320px;width:50px;overflow:hidden"><div class="abs" style="left:17px;top:8px"><svg width="16" height="16" viewBox="0 0 16 16" ><circle cx="4.1" cy="4.1" r="3.9" fill="#d4622a"/><rect x="1.8" y="3.3" width="4.6" height="1.6" fill="#f4e4d8"/>
<circle cx="12" cy="4.1" r="3.9" fill="#8cc03f"/><path d="M10 4.2 l1.4 1.4 l2.5 -2.9" stroke="#eef6dd" stroke-width="1.3" fill="none"/>
<circle cx="4.1" cy="12" r="3.9" fill="#2450c0"/><rect x="3.5" y="10.9" width="1.2" height="3.3" fill="#dfe6fa"/><rect x="3.5" y="9.3" width="1.2" height="1.1" fill="#dfe6fa"/>
<circle cx="12" cy="12" r="3.9" fill="#2450c0"/><path d="M10.7 11 C10.7 9.4 13.3 9.4 13.3 11 C13.3 12 12 12 12 13" stroke="#aebcf0" stroke-width="1.1" fill="none"/><rect x="11.5" y="13.6" width="1.1" height="1" fill="#aebcf0"/></svg></div></div>
<div class="c" style="left:370px;width:52px;overflow:hidden"><div class="abs" style="left:18px;top:8px"><svg width="17" height="16" viewBox="0 0 17 16" ><path d="M8.2 0 C12.8 0 16.4 2.8 16.4 6.6 C16.4 9 15.2 10.6 13.4 11.7 L14.2 15.9 L10.4 13 C9.7 13.2 9 13.3 8.2 13.3 C3.6 13.3 0 10.4 0 6.6 C0 2.8 3.6 0 8.2 0 Z" fill="#1c409e"/><path d="M5.9 4.6 C5.9 1.6 10.7 1.6 10.7 4.6 C10.7 6.4 8.4 6.3 8.4 8.2" stroke="#fff" stroke-width="1.9" fill="none"/><rect x="7.5" y="9.3" width="1.9" height="1.8" fill="#fff"/></svg></div></div>
<div class="c" style="left:422px;width:150px;overflow:hidden"><div class="t" style="left:8.2px;letter-spacing:-0.34px;">188886</div></div>
<div class="c" style="left:572px;width:50px;overflow:hidden"><div class="abs" style="left:17px;top:8px"><svg width="17" height="16" viewBox="0 0 17 16" ><path d="M8.2 0 C12.8 0 16.4 2.8 16.4 6.6 C16.4 9 15.2 10.6 13.4 11.7 L14.2 15.9 L10.4 13 C9.7 13.2 9 13.3 8.2 13.3 C3.6 13.3 0 10.4 0 6.6 C0 2.8 3.6 0 8.2 0 Z" fill="#1c409e"/><rect x="7.2" y="4.8" width="2.1" height="6" fill="#fff"/><rect x="7.2" y="2" width="2.1" height="2" fill="#fff"/></svg></div></div>
<div class="c" style="left:622px;width:150px;overflow:hidden"><div class="t" style="left:8.2px;transform:scaleX(0.9167);transform-origin:0 0;">QC</div></div>
<div class="c" style="left:772px;width:150px;overflow:hidden"><div class="t" style="left:12.8px;letter-spacing:-0.05px;">24/05/2024 07:32</div></div>
<div class="c" style="left:922px;width:150px;overflow:hidden"><div class="t" style="left:8.2px;">Order table data</div></div>
<div class="c" style="left:1072px;width:150px;overflow:hidden"></div>
<div class="c" style="left:1222px;width:150px;overflow:hidden"><div class="t" style="left:8.2px;">1</div></div>
<div class="c" style="left:1372px;width:150px;overflow:hidden"><div class="t" style="left:8.2px;letter-spacing:-0.17px;">Inês Tradutora</div></div>
<div class="c" style="left:1522px;width:150px;overflow:hidden"><div class="t" style="left:8.2px;">2</div></div>
<div class="c" style="left:1672px;width:150px;overflow:hidden"><div class="abs" style="left:12px;top:0"><svg width="92" height="37" viewBox="0 0 92 37" ><g stroke="#f4f4f4" stroke-width="1.25" fill="none">
<path d="M0.2 25.4 H13.4 L18.1 14.2"/><path d="M17.4 25.4 H31.3 L36 14.2"/><path d="M35.2 25.4 H58.8"/><path d="M61.8 25.4 H74.3"/><path d="M76.6 25.4 H89.2"/></g>
<rect x="74.5" y="17.1" width="1.8" height="1.9" fill="#f4f4f4"/><rect x="74.5" y="22" width="1.8" height="1.9" fill="#f4f4f4"/></svg></div></div>
<div class="c" style="left:1822px;width:150px;overflow:hidden"><div class="abs" style="left:12px;top:0"><svg width="92" height="37" viewBox="0 0 92 37" ><g stroke="#f4f4f4" stroke-width="1.25" fill="none">
<path d="M0.2 25.4 H13.4 L18.1 14.2"/><path d="M17.4 25.4 H31.3 L36 14.2"/><path d="M35.2 25.4 H58.8"/><path d="M61.8 25.4 H74.3"/><path d="M76.6 25.4 H89.2"/></g>
<rect x="74.5" y="17.1" width="1.8" height="1.9" fill="#f4f4f4"/><rect x="74.5" y="22" width="1.8" height="1.9" fill="#f4f4f4"/></svg></div></div>
</div>
<div class="row alt" style="top:37px">
<div class="c" style="left:0px;width:60px;border-left:none;overflow:hidden"><div class="abs" style="left:22px;top:8px"><svg width="16" height="16" viewBox="0 0 16 16" ><path d="M3.6 0.2 L8 4.6 L12.4 0.2 L15.8 3.6 L11.4 8 L15.8 12.4 L12.4 15.8 L8 11.4 L3.6 15.8 L0.2 12.4 L4.6 8 L0.2 3.6 Z" fill="#8c1a10"/>
<path d="M3.6 0.2 L8 4.6 L12.4 0.2 L15.8 3.6 L13.4 6 C9 5.4 5.5 6.4 2.4 5.8 L0.2 3.6 Z" fill="#a0342a"/></svg></div></div>
<div class="c" style="left:60px;width:70px;overflow:hidden"><div class="abs" style="left:27px;top:10px"><svg width="16" height="15" viewBox="0 0 16 15" ><rect x="0.6" y="0.6" width="13.6" height="10.6" rx="1.4" fill="#fff" stroke="#3a3a3a" stroke-width="0.9"/>
<path d="M1.2 1.2 L7.4 6.4 L13.6 1.2 M1.2 10.6 L5.6 5.2 M13.6 10.6 L9.2 5.2" stroke="#333" stroke-width="0.7" fill="none"/>
<circle cx="10.9" cy="9.8" r="4.7" fill="#6cc12e"/><circle cx="10.9" cy="9.8" r="3.3" fill="#8ed552"/>
<path d="M8 8.8 H10.8 V7.2 L14 9.8 L10.8 12.4 V10.8 H8 Z" fill="#fff"/></svg></div></div>
<div class="c" style="left:130px;width:70px;overflow:hidden"></div>
<div class="c" style="left:200px;width:70px;overflow:hidden"></div>
<div class="c" style="left:270px;width:50px;overflow:hidden"></div>
<div class="c" style="left:320px;width:50px;overflow:hidden"><div class="abs" style="left:17px;top:8px"><svg width="16" height="16" viewBox="0 0 16 16" ><circle cx="8" cy="8" r="8" fill="#8cbf3f"/><path d="M3.6 8.4 L6.8 11.4 L12.6 5" stroke="#fff" stroke-width="2.5" fill="none"/></svg></div></div>
<div class="c" style="left:370px;width:52px;overflow:hidden"><div class="abs" style="left:18px;top:8px"><svg width="17" height="16" viewBox="0 0 17 16" ><path d="M8.2 0 C12.8 0 16.4 2.8 16.4 6.6 C16.4 9 15.2 10.6 13.4 11.7 L14.2 15.9 L10.4 13 C9.7 13.2 9 13.3 8.2 13.3 C3.6 13.3 0 10.4 0 6.6 C0 2.8 3.6 0 8.2 0 Z" fill="#1c409e"/><path d="M5.9 4.6 C5.9 1.6 10.7 1.6 10.7 4.6 C10.7 6.4 8.4 6.3 8.4 8.2" stroke="#fff" stroke-width="1.9" fill="none"/><rect x="7.5" y="9.3" width="1.9" height="1.8" fill="#fff"/></svg></div></div>
<div class="c" style="left:422px;width:150px;overflow:hidden"><div class="t" style="left:8.2px;letter-spacing:-0.34px;">188886</div></div>
<div class="c" style="left:572px;width:50px;overflow:hidden"><div class="abs" style="left:17px;top:8px"><svg width="17" height="16" viewBox="0 0 17 16" ><path d="M8.2 0 C12.8 0 16.4 2.8 16.4 6.6 C16.4 9 15.2 10.6 13.4 11.7 L14.2 15.9 L10.4 13 C9.7 13.2 9 13.3 8.2 13.3 C3.6 13.3 0 10.4 0 6.6 C0 2.8 3.6 0 8.2 0 Z" fill="#1c409e"/><rect x="7.2" y="4.8" width="2.1" height="6" fill="#fff"/><rect x="7.2" y="2" width="2.1" height="2" fill="#fff"/></svg></div></div>
<div class="c" style="left:622px;width:150px;overflow:hidden"><div class="t" style="left:8.2px;letter-spacing:0.10px;">Timing</div></div>
<div class="c" style="left:772px;width:150px;overflow:hidden"><div class="t" style="left:12.8px;letter-spacing:-0.05px;">23/05/2024 06:09</div></div>
<div class="c" style="left:922px;width:150px;overflow:hidden"><div class="t" style="left:8.2px;">Order table data</div></div>
<div class="c" style="left:1072px;width:150px;overflow:hidden"></div>
<div class="c" style="left:1222px;width:150px;overflow:hidden"><div class="t" style="left:8.2px;">1</div></div>
<div class="c" style="left:1372px;width:150px;overflow:hidden"><div class="t" style="left:8.2px;transform:scaleX(0.9336);transform-origin:0 0;">Sara Cunha</div></div>
<div class="c" style="left:1522px;width:150px;overflow:hidden"><div class="t" style="left:8.2px;">2</div></div>
<div class="c" style="left:1672px;width:150px;overflow:hidden"><div class="abs" style="left:12px;top:0"><svg width="92" height="37" viewBox="0 0 92 37" ><g stroke="#f4f4f4" stroke-width="1.25" fill="none">
<path d="M0.2 25.4 H13.4 L18.1 14.2"/><path d="M17.4 25.4 H31.3 L36 14.2"/><path d="M35.2 25.4 H58.8"/><path d="M61.8 25.4 H74.3"/><path d="M76.6 25.4 H89.2"/></g>
<rect x="74.5" y="17.1" width="1.8" height="1.9" fill="#f4f4f4"/><rect x="74.5" y="22" width="1.8" height="1.9" fill="#f4f4f4"/></svg></div></div>
<div class="c" style="left:1822px;width:150px;overflow:hidden"><div class="abs" style="left:12px;top:0"><svg width="92" height="37" viewBox="0 0 92 37" ><g stroke="#f4f4f4" stroke-width="1.25" fill="none">
<path d="M0.2 25.4 H13.4 L18.1 14.2"/><path d="M17.4 25.4 H31.3 L36 14.2"/><path d="M35.2 25.4 H58.8"/><path d="M61.8 25.4 H74.3"/><path d="M76.6 25.4 H89.2"/></g>
<rect x="74.5" y="17.1" width="1.8" height="1.9" fill="#f4f4f4"/><rect x="74.5" y="22" width="1.8" height="1.9" fill="#f4f4f4"/></svg></div></div>
</div>
<div class="row" style="top:74px">
<div class="c" style="left:0px;width:60px;border-left:none;overflow:hidden"><div class="abs" style="left:22px;top:8px"><svg width="16" height="16" viewBox="0 0 16 16" ><path d="M3.6 0.2 L8 4.6 L12.4 0.2 L15.8 3.6 L11.4 8 L15.8 12.4 L12.4 15.8 L8 11.4 L3.6 15.8 L0.2 12.4 L4.6 8 L0.2 3.6 Z" fill="#8c1a10"/>
<path d="M3.6 0.2 L8 4.6 L12.4 0.2 L15.8 3.6 L13.4 6 C9 5.4 5.5 6.4 2.4 5.8 L0.2 3.6 Z" fill="#a0342a"/></svg></div></div>
<div class="c" style="left:60px;width:70px;overflow:hidden"><div class="abs" style="left:27px;top:10px"><svg width="16" height="15" viewBox="0 0 16 15" ><rect x="0.6" y="0.6" width="13.6" height="10.6" rx="1.4" fill="#fff" stroke="#3a3a3a" stroke-width="0.9"/>
<path d="M1.2 1.2 L7.4 6.4 L13.6 1.2 M1.2 10.6 L5.6 5.2 M13.6 10.6 L9.2 5.2" stroke="#333" stroke-width="0.7" fill="none"/>
<circle cx="10.9" cy="9.8" r="4.7" fill="#6cc12e"/><circle cx="10.9" cy="9.8" r="3.3" fill="#8ed552"/>
<path d="M8 8.8 H10.8 V7.2 L14 9.8 L10.8 12.4 V10.8 H8 Z" fill="#fff"/></svg></div></div>
<div class="c" style="left:130px;width:70px;overflow:hidden"></div>
<div class="c" style="left:200px;width:70px;overflow:hidden"></div>
<div class="c" style="left:270px;width:50px;overflow:hidden"></div>
<div class="c" style="left:320px;width:50px;overflow:hidden"><div class="abs" style="left:17px;top:8px"><svg width="16" height="16" viewBox="0 0 16 16" ><circle cx="7.9" cy="7.9" r="7.1" fill="#fff" stroke="#8c8c8c" stroke-width="1.5"/>
<path d="M7.8 -0.1 C4.6 0.1 2.6 1.9 2.1 4.3 L0.3 4.1 L3 8.3 L6.1 5 L4.3 4.7 C4.7 3.3 5.9 2.2 7.8 2 Z" fill="#3cb52e"/>
<rect x="7.3" y="3.2" width="1.4" height="4.6" fill="#555"/><rect x="8.5" y="7.2" width="4.7" height="1.5" fill="#4fb6e0"/><path d="M7.7 8.5 L4.1 12" stroke="#f0b030" stroke-width="1.2"/></svg></div></div>
<div class="c" style="left:370px;width:52px;overflow:hidden"><div class="abs" style="left:18px;top:8px"><svg width="17" height="16" viewBox="0 0 17 16" ><path d="M8.2 0 C12.8 0 16.4 2.8 16.4 6.6 C16.4 9 15.2 10.6 13.4 11.7 L14.2 15.9 L10.4 13 C9.7 13.2 9 13.3 8.2 13.3 C3.6 13.3 0 10.4 0 6.6 C0 2.8 3.6 0 8.2 0 Z" fill="#1c409e"/><path d="M5.9 4.6 C5.9 1.6 10.7 1.6 10.7 4.6 C10.7 6.4 8.4 6.3 8.4 8.2" stroke="#fff" stroke-width="1.9" fill="none"/><rect x="7.5" y="9.3" width="1.9" height="1.8" fill="#fff"/></svg></div></div>
<div class="c" style="left:422px;width:150px;overflow:hidden"><div class="t" style="left:8.2px;letter-spacing:-0.34px;">188886</div></div>
<div class="c" style="left:572px;width:50px;overflow:hidden"><div class="abs" style="left:17px;top:8px"><svg width="17" height="16" viewBox="0 0 17 16" ><path d="M8.2 0 C12.8 0 16.4 2.8 16.4 6.6 C16.4 9 15.2 10.6 13.4 11.7 L14.2 15.9 L10.4 13 C9.7 13.2 9 13.3 8.2 13.3 C3.6 13.3 0 10.4 0 6.6 C0 2.8 3.6 0 8.2 0 Z" fill="#1c409e"/><rect x="7.2" y="4.8" width="2.1" height="6" fill="#fff"/><rect x="7.2" y="2" width="2.1" height="2" fill="#fff"/></svg></div></div>
<div class="c" style="left:622px;width:150px;overflow:hidden"><div class="t" style="left:8.2px;transform:scaleX(0.9167);transform-origin:0 0;">QC</div></div>
<div class="c" style="left:772px;width:150px;overflow:hidden"><div class="t" style="left:12.8px;letter-spacing:-0.05px;">23/05/2024 06:09</div></div>
<div class="c" style="left:922px;width:150px;overflow:hidden"><div class="t" style="left:8.2px;">Order table data</div></div>
<div class="c" style="left:1072px;width:150px;overflow:hidden"></div>
<div class="c" style="left:1222px;width:150px;overflow:hidden"><div class="t" style="left:8.2px;">1</div></div>
<div class="c" style="left:1372px;width:150px;overflow:hidden"><div class="t" style="left:8.2px;letter-spacing:-0.17px;">Inês Tradutora</div></div>
<div class="c" style="left:1522px;width:150px;overflow:hidden"><div class="t" style="left:8.2px;">2</div></div>
<div class="c" style="left:1672px;width:150px;overflow:hidden"><div class="abs" style="left:12px;top:0"><svg width="92" height="37" viewBox="0 0 92 37" ><g stroke="#f4f4f4" stroke-width="1.25" fill="none">
<path d="M0.2 25.4 H13.4 L18.1 14.2"/><path d="M17.4 25.4 H31.3 L36 14.2"/><path d="M35.2 25.4 H58.8"/><path d="M61.8 25.4 H74.3"/><path d="M76.6 25.4 H89.2"/></g>
<rect x="74.5" y="17.1" width="1.8" height="1.9" fill="#f4f4f4"/><rect x="74.5" y="22" width="1.8" height="1.9" fill="#f4f4f4"/></svg></div></div>
<div class="c" style="left:1822px;width:150px;overflow:hidden"><div class="abs" style="left:12px;top:0"><svg width="92" height="37" viewBox="0 0 92 37" ><g stroke="#f4f4f4" stroke-width="1.25" fill="none">
<path d="M0.2 25.4 H13.4 L18.1 14.2"/><path d="M17.4 25.4 H31.3 L36 14.2"/><path d="M35.2 25.4 H58.8"/><path d="M61.8 25.4 H74.3"/><path d="M76.6 25.4 H89.2"/></g>
<rect x="74.5" y="17.1" width="1.8" height="1.9" fill="#f4f4f4"/><rect x="74.5" y="22" width="1.8" height="1.9" fill="#f4f4f4"/></svg></div></div>
</div>
<div class="row alt" style="top:111px">
<div class="c" style="left:0px;width:60px;border-left:none;overflow:hidden"><div class="abs" style="left:22px;top:8px"><svg width="16" height="16" viewBox="0 0 16 16" ><path d="M3.6 0.2 L8 4.6 L12.4 0.2 L15.8 3.6 L11.4 8 L15.8 12.4 L12.4 15.8 L8 11.4 L3.6 15.8 L0.2 12.4 L4.6 8 L0.2 3.6 Z" fill="#8c1a10"/>
<path d="M3.6 0.2 L8 4.6 L12.4 0.2 L15.8 3.6 L13.4 6 C9 5.4 5.5 6.4 2.4 5.8 L0.2 3.6 Z" fill="#a0342a"/></svg></div></div>
<div class="c" style="left:60px;width:70px;overflow:hidden"><div class="abs" style="left:27px;top:10px"><svg width="16" height="15" viewBox="0 0 16 15" ><rect x="0.6" y="0.6" width="13.6" height="10.6" rx="1.4" fill="#fff" stroke="#3a3a3a" stroke-width="0.9"/>
<path d="M1.2 1.2 L7.4 6.4 L13.6 1.2 M1.2 10.6 L5.6 5.2 M13.6 10.6 L9.2 5.2" stroke="#333" stroke-width="0.7" fill="none"/>
<circle cx="10.9" cy="9.8" r="4.7" fill="#6cc12e"/><circle cx="10.9" cy="9.8" r="3.3" fill="#8ed552"/>
<path d="M8 8.8 H10.8 V7.2 L14 9.8 L10.8 12.4 V10.8 H8 Z" fill="#fff"/></svg></div></div>
<div class="c" style="left:130px;width:70px;overflow:hidden"></div>
<div class="c" style="left:200px;width:70px;overflow:hidden"></div>
<div class="c" style="left:270px;width:50px;overflow:hidden"></div>
<div class="c" style="left:320px;width:50px;overflow:hidden"><div class="abs" style="left:17px;top:8px"><svg width="16" height="16" viewBox="0 0 16 16" ><circle cx="8" cy="8" r="8" fill="#8cbf3f"/><path d="M3.6 8.4 L6.8 11.4 L12.6 5" stroke="#fff" stroke-width="2.5" fill="none"/></svg></div></div>
<div class="c" style="left:370px;width:52px;overflow:hidden"><div class="abs" style="left:18px;top:8px"><svg width="17" height="16" viewBox="0 0 17 16" ><path d="M8.2 0 C12.8 0 16.4 2.8 16.4 6.6 C16.4 9 15.2 10.6 13.4 11.7 L14.2 15.9 L10.4 13 C9.7 13.2 9 13.3 8.2 13.3 C3.6 13.3 0 10.4 0 6.6 C0 2.8 3.6 0 8.2 0 Z" fill="#1c409e"/><path d="M5.9 4.6 C5.9 1.6 10.7 1.6 10.7 4.6 C10.7 6.4 8.4 6.3 8.4 8.2" stroke="#fff" stroke-width="1.9" fill="none"/><rect x="7.5" y="9.3" width="1.9" height="1.8" fill="#fff"/></svg></div></div>
<div class="c" style="left:422px;width:150px;overflow:hidden"><div class="t" style="left:8.2px;letter-spacing:-0.34px;">188886</div></div>
<div class="c" style="left:572px;width:50px;overflow:hidden"><div class="abs" style="left:17px;top:8px"><svg width="17" height="16" viewBox="0 0 17 16" ><path d="M8.2 0 C12.8 0 16.4 2.8 16.4 6.6 C16.4 9 15.2 10.6 13.4 11.7 L14.2 15.9 L10.4 13 C9.7 13.2 9 13.3 8.2 13.3 C3.6 13.3 0 10.4 0 6.6 C0 2.8 3.6 0 8.2 0 Z" fill="#1c409e"/><rect x="7.2" y="4.8" width="2.1" height="6" fill="#fff"/><rect x="7.2" y="2" width="2.1" height="2" fill="#fff"/></svg></div></div>
<div class="c" style="left:622px;width:150px;overflow:hidden"><div class="t" style="left:8.2px;letter-spacing:0.10px;">Timing</div></div>
<div class="c" style="left:772px;width:150px;overflow:hidden"><div class="t" style="left:12.8px;letter-spacing:-0.05px;">23/05/2024 06:09</div></div>
<div class="c" style="left:922px;width:150px;overflow:hidden"><div class="t" style="left:8.2px;">Order table data</div></div>
<div class="c" style="left:1072px;width:150px;overflow:hidden"></div>
<div class="c" style="left:1222px;width:150px;overflow:hidden"><div class="t" style="left:8.2px;">1</div></div>
<div class="c" style="left:1372px;width:150px;overflow:hidden"><div class="t" style="left:8.2px;transform:scaleX(0.9336);transform-origin:0 0;">Sara Cunha</div></div>
<div class="c" style="left:1522px;width:150px;overflow:hidden"><div class="t" style="left:8.2px;">2</div></div>
<div class="c" style="left:1672px;width:150px;overflow:hidden"><div class="abs" style="left:12px;top:0"><svg width="92" height="37" viewBox="0 0 92 37" ><g stroke="#f4f4f4" stroke-width="1.25" fill="none">
<path d="M0.2 25.4 H13.4 L18.1 14.2"/><path d="M17.4 25.4 H31.3 L36 14.2"/><path d="M35.2 25.4 H58.8"/><path d="M61.8 25.4 H74.3"/><path d="M76.6 25.4 H89.2"/></g>
<rect x="74.5" y="17.1" width="1.8" height="1.9" fill="#f4f4f4"/><rect x="74.5" y="22" width="1.8" height="1.9" fill="#f4f4f4"/></svg></div></div>
<div class="c" style="left:1822px;width:150px;overflow:hidden"><div class="abs" style="left:12px;top:0"><svg width="92" height="37" viewBox="0 0 92 37" ><g stroke="#f4f4f4" stroke-width="1.25" fill="none">
<path d="M0.2 25.4 H13.4 L18.1 14.2"/><path d="M17.4 25.4 H31.3 L36 14.2"/><path d="M35.2 25.4 H58.8"/><path d="M61.8 25.4 H74.3"/><path d="M76.6 25.4 H89.2"/></g>
<rect x="74.5" y="17.1" width="1.8" height="1.9" fill="#f4f4f4"/><rect x="74.5" y="22" width="1.8" height="1.9" fill="#f4f4f4"/></svg></div></div>
</div>
<div class="row" style="top:148px">
<div class="c" style="left:0px;width:60px;border-left:none;overflow:hidden"><div class="abs" style="left:22px;top:8px"><svg width="16" height="16" viewBox="0 0 16 16" ><path d="M3.6 0.2 L8 4.6 L12.4 0.2 L15.8 3.6 L11.4 8 L15.8 12.4 L12.4 15.8 L8 11.4 L3.6 15.8 L0.2 12.4 L4.6 8 L0.2 3.6 Z" fill="#8c1a10"/>
<path d="M3.6 0.2 L8 4.6 L12.4 0.2 L15.8 3.6 L13.4 6 C9 5.4 5.5 6.4 2.4 5.8 L0.2 3.6 Z" fill="#a0342a"/></svg></div></div>
<div class="c" style="left:60px;width:70px;overflow:hidden"><div class="abs" style="left:27px;top:10px"><svg width="16" height="15" viewBox="0 0 16 15" ><rect x="0.6" y="0.6" width="13.6" height="10.6" rx="1.4" fill="#fff" stroke="#3a3a3a" stroke-width="0.9"/>
<path d="M1.2 1.2 L7.4 6.4 L13.6 1.2 M1.2 10.6 L5.6 5.2 M13.6 10.6 L9.2 5.2" stroke="#333" stroke-width="0.7" fill="none"/>
<circle cx="10.9" cy="9.8" r="4.7" fill="#6cc12e"/><circle cx="10.9" cy="9.8" r="3.3" fill="#8ed552"/>
<path d="M8 8.8 H10.8 V7.2 L14 9.8 L10.8 12.4 V10.8 H8 Z" fill="#fff"/></svg></div></div>
<div class="c" style="left:130px;width:70px;overflow:hidden"></div>
<div class="c" style="left:200px;width:70px;overflow:hidden"></div>
<div class="c" style="left:270px;width:50px;overflow:hidden"></div>
<div class="c" style="left:320px;width:50px;overflow:hidden"><div class="abs" style="left:17px;top:8px"><svg width="16" height="16" viewBox="0 0 16 16" ><circle cx="8" cy="8" r="8" fill="#8cbf3f"/><path d="M3.6 8.4 L6.8 11.4 L12.6 5" stroke="#fff" stroke-width="2.5" fill="none"/></svg></div></div>
<div class="c" style="left:370px;width:52px;overflow:hidden"><div class="abs" style="left:18px;top:8px"><svg width="17" height="16" viewBox="0 0 17 16" ><path d="M8.2 0 C12.8 0 16.4 2.8 16.4 6.6 C16.4 9 15.2 10.6 13.4 11.7 L14.2 15.9 L10.4 13 C9.7 13.2 9 13.3 8.2 13.3 C3.6 13.3 0 10.4 0 6.6 C0 2.8 3.6 0 8.2 0 Z" fill="#1c409e"/><path d="M5.9 4.6 C5.9 1.6 10.7 1.6 10.7 4.6 C10.7 6.4 8.4 6.3 8.4 8.2" stroke="#fff" stroke-width="1.9" fill="none"/><rect x="7.5" y="9.3" width="1.9" height="1.8" fill="#fff"/></svg></div></div>
<div class="c" style="left:422px;width:150px;overflow:hidden"><div class="t" style="left:8.2px;letter-spacing:-0.34px;">188885</div></div>
<div class="c" style="left:572px;width:50px;overflow:hidden"><div class="abs" style="left:17px;top:8px"><svg width="17" height="16" viewBox="0 0 17 16" ><path d="M8.2 0 C12.8 0 16.4 2.8 16.4 6.6 C16.4 9 15.2 10.6 13.4 11.7 L14.2 15.9 L10.4 13 C9.7 13.2 9 13.3 8.2 13.3 C3.6 13.3 0 10.4 0 6.6 C0 2.8 3.6 0 8.2 0 Z" fill="#1c409e"/><rect x="7.2" y="4.8" width="2.1" height="6" fill="#fff"/><rect x="7.2" y="2" width="2.1" height="2" fill="#fff"/></svg></div></div>
<div class="c" style="left:622px;width:150px;overflow:hidden"><div class="t" style="left:8.2px;transform:scaleX(0.9167);transform-origin:0 0;">QC</div></div>
<div class="c" style="left:772px;width:150px;overflow:hidden"><div class="t" style="left:12.8px;letter-spacing:-0.05px;">23/05/2024 06:02</div></div>
<div class="c" style="left:922px;width:150px;overflow:hidden"><div class="t" style="left:8.2px;">Order table data</div></div>
<div class="c" style="left:1072px;width:150px;overflow:hidden"></div>
<div class="c" style="left:1222px;width:150px;overflow:hidden"><div class="t" style="left:8.2px;">1</div></div>
<div class="c" style="left:1372px;width:150px;overflow:hidden"><div class="t" style="left:8.2px;transform:scaleX(0.9336);transform-origin:0 0;">Sara Cunha</div></div>
<div class="c" style="left:1522px;width:150px;overflow:hidden"><div class="t" style="left:8.2px;">2</div></div>
<div class="c" style="left:1672px;width:150px;overflow:hidden"><div class="abs" style="left:12px;top:0"><svg width="92" height="37" viewBox="0 0 92 37" ><g stroke="#f4f4f4" stroke-width="1.25" fill="none">
<path d="M0.2 25.4 H13.4 L18.1 14.2"/><path d="M17.4 25.4 H31.3 L36 14.2"/><path d="M35.2 25.4 H58.8"/><path d="M61.8 25.4 H74.3"/><path d="M76.6 25.4 H89.2"/></g>
<rect x="74.5" y="17.1" width="1.8" height="1.9" fill="#f4f4f4"/><rect x="74.5" y="22" width="1.8" height="1.9" fill="#f4f4f4"/></svg></div></div>
<div class="c" style="left:1822px;width:150px;overflow:hidden"><div class="abs" style="left:12px;top:0"><svg width="92" height="37" viewBox="0 0 92 37" ><g stroke="#f4f4f4" stroke-width="1.25" fill="none">
<path d="M0.2 25.4 H13.4 L18.1 14.2"/><path d="M17.4 25.4 H31.3 L36 14.2"/><path d="M35.2 25.4 H58.8"/><path d="M61.8 25.4 H74.3"/><path d="M76.6 25.4 H89.2"/></g>
<rect x="74.5" y="17.1" width="1.8" height="1.9" fill="#f4f4f4"/><rect x="74.5" y="22" width="1.8" height="1.9" fill="#f4f4f4"/></svg></div></div>
</div>
<div class="row alt" style="top:185px">
<div class="c" style="left:0px;width:60px;border-left:none;overflow:hidden"><div class="abs" style="left:22px;top:8px"><svg width="16" height="16" viewBox="0 0 16 16" ><path d="M3.6 0.2 L8 4.6 L12.4 0.2 L15.8 3.6 L11.4 8 L15.8 12.4 L12.4 15.8 L8 11.4 L3.6 15.8 L0.2 12.4 L4.6 8 L0.2 3.6 Z" fill="#8c1a10"/>
<path d="M3.6 0.2 L8 4.6 L12.4 0.2 L15.8 3.6 L13.4 6 C9 5.4 5.5 6.4 2.4 5.8 L0.2 3.6 Z" fill="#a0342a"/></svg></div></div>
<div class="c" style="left:60px;width:70px;overflow:hidden"><div class="abs" style="left:27px;top:10px"><svg width="16" height="15" viewBox="0 0 16 15" ><rect x="0.6" y="0.6" width="13.6" height="10.6" rx="1.4" fill="#fff" stroke="#3a3a3a" stroke-width="0.9"/>
<path d="M1.2 1.2 L7.4 6.4 L13.6 1.2 M1.2 10.6 L5.6 5.2 M13.6 10.6 L9.2 5.2" stroke="#333" stroke-width="0.7" fill="none"/>
<circle cx="10.9" cy="9.8" r="4.7" fill="#6cc12e"/><circle cx="10.9" cy="9.8" r="3.3" fill="#8ed552"/>
<path d="M8 8.8 H10.8 V7.2 L14 9.8 L10.8 12.4 V10.8 H8 Z" fill="#fff"/></svg></div></div>
<div class="c" style="left:130px;width:70px;overflow:hidden"></div>
<div class="c" style="left:200px;width:70px;overflow:hidden"></div>
<div class="c" style="left:270px;width:50px;overflow:hidden"></div>
<div class="c" style="left:320px;width:50px;overflow:hidden"><div class="abs" style="left:17px;top:8px"><svg width="16" height="16" viewBox="0 0 16 16" ><circle cx="7.9" cy="7.9" r="7.1" fill="#fff" stroke="#8c8c8c" stroke-width="1.5"/>
<path d="M7.8 -0.1 C4.6 0.1 2.6 1.9 2.1 4.3 L0.3 4.1 L3 8.3 L6.1 5 L4.3 4.7 C4.7 3.3 5.9 2.2 7.8 2 Z" fill="#3cb52e"/>
<rect x="7.3" y="3.2" width="1.4" height="4.6" fill="#555"/><rect x="8.5" y="7.2" width="4.7" height="1.5" fill="#4fb6e0"/><path d="M7.7 8.5 L4.1 12" stroke="#f0b030" stroke-width="1.2"/></svg></div></div>
<div class="c" style="left:370px;width:52px;overflow:hidden"><div class="abs" style="left:18px;top:8px"><svg width="17" height="16" viewBox="0 0 17 16" ><path d="M8.2 0 C12.8 0 16.4 2.8 16.4 6.6 C16.4 9 15.2 10.6 13.4 11.7 L14.2 15.9 L10.4 13 C9.7 13.2 9 13.3 8.2 13.3 C3.6 13.3 0 10.4 0 6.6 C0 2.8 3.6 0 8.2 0 Z" fill="#1c409e"/><path d="M5.9 4.6 C5.9 1.6 10.7 1.6 10.7 4.6 C10.7 6.4 8.4 6.3 8.4 8.2" stroke="#fff" stroke-width="1.9" fill="none"/><rect x="7.5" y="9.3" width="1.9" height="1.8" fill="#fff"/></svg></div></div>
<div class="c" style="left:422px;width:150px;overflow:hidden"><div class="t" style="left:8.2px;letter-spacing:-0.34px;">188885</div></div>
<div class="c" style="left:572px;width:50px;overflow:hidden"><div class="abs" style="left:17px;top:8px"><svg width="17" height="16" viewBox="0 0 17 16" ><path d="M8.2 0 C12.8 0 16.4 2.8 16.4 6.6 C16.4 9 15.2 10.6 13.4 11.7 L14.2 15.9 L10.4 13 C9.7 13.2 9 13.3 8.2 13.3 C3.6 13.3 0 10.4 0 6.6 C0 2.8 3.6 0 8.2 0 Z" fill="#1c409e"/><rect x="7.2" y="4.8" width="2.1" height="6" fill="#fff"/><rect x="7.2" y="2" width="2.1" height="2" fill="#fff"/></svg></div></div>
<div class="c" style="left:622px;width:150px;overflow:hidden"><div class="t" style="left:8.2px;letter-spacing:0.10px;">Timing</div></div>
<div class="c" style="left:772px;width:150px;overflow:hidden"><div class="t" style="left:12.8px;letter-spacing:-0.05px;">23/05/2024 06:02</div></div>
<div class="c" style="left:922px;width:150px;overflow:hidden"><div class="t" style="left:8.2px;">Order table data</div></div>
<div class="c" style="left:1072px;width:150px;overflow:hidden"></div>
<div class="c" style="left:1222px;width:150px;overflow:hidden"><div class="t" style="left:8.2px;">1</div></div>
<div class="c" style="left:1372px;width:150px;overflow:hidden"><div class="t" style="left:8.2px;letter-spacing:-0.17px;">Inês Tradutora</div></div>
<div class="c" style="left:1522px;width:150px;overflow:hidden"><div class="t" style="left:8.2px;">2</div></div>
<div class="c" style="left:1672px;width:150px;overflow:hidden"><div class="abs" style="left:12px;top:0"><svg width="92" height="37" viewBox="0 0 92 37" ><g stroke="#f4f4f4" stroke-width="1.25" fill="none">
<path d="M0.2 25.4 H13.4 L18.1 14.2"/><path d="M17.4 25.4 H31.3 L36 14.2"/><path d="M35.2 25.4 H58.8"/><path d="M61.8 25.4 H74.3"/><path d="M76.6 25.4 H89.2"/></g>
<rect x="74.5" y="17.1" width="1.8" height="1.9" fill="#f4f4f4"/><rect x="74.5" y="22" width="1.8" height="1.9" fill="#f4f4f4"/></svg></div></div>
<div class="c" style="left:1822px;width:150px;overflow:hidden"><div class="abs" style="left:12px;top:0"><svg width="92" height="37" viewBox="0 0 92 37" ><g stroke="#f4f4f4" stroke-width="1.25" fill="none">
<path d="M0.2 25.4 H13.4 L18.1 14.2"/><path d="M17.4 25.4 H31.3 L36 14.2"/><path d="M35.2 25.4 H58.8"/><path d="M61.8 25.4 H74.3"/><path d="M76.6 25.4 H89.2"/></g>
<rect x="74.5" y="17.1" width="1.8" height="1.9" fill="#f4f4f4"/><rect x="74.5" y="22" width="1.8" height="1.9" fill="#f4f4f4"/></svg></div></div>
</div>
<div class="row" style="top:222px">
<div class="c" style="left:0px;width:60px;border-left:none;overflow:hidden"><div class="abs" style="left:22px;top:8px"><svg width="16" height="16" viewBox="0 0 16 16" ><path d="M3.6 0.2 L8 4.6 L12.4 0.2 L15.8 3.6 L11.4 8 L15.8 12.4 L12.4 15.8 L8 11.4 L3.6 15.8 L0.2 12.4 L4.6 8 L0.2 3.6 Z" fill="#8c1a10"/>
<path d="M3.6 0.2 L8 4.6 L12.4 0.2 L15.8 3.6 L13.4 6 C9 5.4 5.5 6.4 2.4 5.8 L0.2 3.6 Z" fill="#a0342a"/></svg></div></div>
<div class="c" style="left:60px;width:70px;overflow:hidden"><div class="abs" style="left:27px;top:10px"><svg width="16" height="15" viewBox="0 0 16 15" ><rect x="0.6" y="0.6" width="13.6" height="10.6" rx="1.4" fill="#fff" stroke="#3a3a3a" stroke-width="0.9"/>
<path d="M1.2 1.2 L7.4 6.4 L13.6 1.2 M1.2 10.6 L5.6 5.2 M13.6 10.6 L9.2 5.2" stroke="#333" stroke-width="0.7" fill="none"/>
<circle cx="10.9" cy="9.8" r="4.7" fill="#6cc12e"/><circle cx="10.9" cy="9.8" r="3.3" fill="#8ed552"/>
<path d="M8 8.8 H10.8 V7.2 L14 9.8 L10.8 12.4 V10.8 H8 Z" fill="#fff"/></svg></div></div>
<div class="c" style="left:130px;width:70px;overflow:hidden"></div>
<div class="c" style="left:200px;width:70px;overflow:hidden"></div>
<div class="c" style="left:270px;width:50px;overflow:hidden"></div>
<div class="c" style="left:320px;width:50px;overflow:hidden"><div class="abs" style="left:17px;top:8px"><svg width="16" height="16" viewBox="0 0 16 16" ><circle cx="8" cy="8" r="8" fill="#8cbf3f"/><path d="M3.6 8.4 L6.8 11.4 L12.6 5" stroke="#fff" stroke-width="2.5" fill="none"/></svg></div></div>
<div class="c" style="left:370px;width:52px;overflow:hidden"><div class="abs" style="left:18px;top:8px"><svg width="17" height="16" viewBox="0 0 17 16" ><path d="M8.2 0 C12.8 0 16.4 2.8 16.4 6.6 C16.4 9 15.2 10.6 13.4 11.7 L14.2 15.9 L10.4 13 C9.7 13.2 9 13.3 8.2 13.3 C3.6 13.3 0 10.4 0 6.6 C0 2.8 3.6 0 8.2 0 Z" fill="#1c409e"/><path d="M5.9 4.6 C5.9 1.6 10.7 1.6 10.7 4.6 C10.7 6.4 8.4 6.3 8.4 8.2" stroke="#fff" stroke-width="1.9" fill="none"/><rect x="7.5" y="9.3" width="1.9" height="1.8" fill="#fff"/></svg></div></div>
<div class="c" style="left:422px;width:150px;overflow:hidden"><div class="t" style="left:8.2px;letter-spacing:-0.34px;">188878</div></div>
<div class="c" style="left:572px;width:50px;overflow:hidden"><div class="abs" style="left:17px;top:8px"><svg width="17" height="16" viewBox="0 0 17 16" ><path d="M8.2 0 C12.8 0 16.4 2.8 16.4 6.6 C16.4 9 15.2 10.6 13.4 11.7 L14.2 15.9 L10.4 13 C9.7 13.2 9 13.3 8.2 13.3 C3.6 13.3 0 10.4 0 6.6 C0 2.8 3.6 0 8.2 0 Z" fill="#1c409e"/><rect x="7.2" y="4.8" width="2.1" height="6" fill="#fff"/><rect x="7.2" y="2" width="2.1" height="2" fill="#fff"/></svg></div></div>
<div class="c" style="left:622px;width:150px;overflow:hidden"><div class="t" style="left:8.2px;letter-spacing:0.10px;">Timing</div></div>
<div class="c" style="left:772px;width:150px;overflow:hidden"><div class="t" style="left:12.8px;letter-spacing:-0.05px;">23/05/2024 03:23</div></div>
<div class="c" style="left:922px;width:150px;overflow:hidden"><div class="t" style="left:8.2px;letter-spacing:0.16px;">4171- Unit reporting</div></div>
<div class="c" style="left:1072px;width:150px;overflow:hidden"></div>
<div class="c" style="left:1222px;width:150px;overflow:hidden"><div class="t" style="left:8.2px;">0</div></div>
<div class="c" style="left:1372px;width:150px;overflow:hidden"><div class="t" style="left:8.2px;letter-spacing:-0.36px;">Renato Barcelos</div></div>
<div class="c" style="left:1522px;width:150px;overflow:hidden"><div class="t" style="left:8.2px;">0</div></div>
<div class="c" style="left:1672px;width:150px;overflow:hidden"><div class="abs" style="left:12px;top:0"><svg width="92" height="37" viewBox="0 0 92 37" ><g stroke="#f4f4f4" stroke-width="1.25" fill="none">
<path d="M0.2 25.4 H13.4 L18.1 14.2"/><path d="M17.4 25.4 H31.3 L36 14.2"/><path d="M35.2 25.4 H58.8"/><path d="M61.8 25.4 H74.3"/><path d="M76.6 25.4 H89.2"/></g>
<rect x="74.5" y="17.1" width="1.8" height="1.9" fill="#f4f4f4"/><rect x="74.5" y="22" width="1.8" height="1.9" fill="#f4f4f4"/></svg></div></div>
<div class="c" style="left:1822px;width:150px;overflow:hidden"><div class="abs" style="left:12px;top:0"><svg width="92" height="37" viewBox="0 0 92 37" ><g stroke="#f4f4f4" stroke-width="1.25" fill="none">
<path d="M0.2 25.4 H13.4 L18.1 14.2"/><path d="M17.4 25.4 H31.3 L36 14.2"/><path d="M35.2 25.4 H58.8"/><path d="M61.8 25.4 H74.3"/><path d="M76.6 25.4 H89.2"/></g>
<rect x="74.5" y="17.1" width="1.8" height="1.9" fill="#f4f4f4"/><rect x="74.5" y="22" width="1.8" height="1.9" fill="#f4f4f4"/></svg></div></div>
</div>
<div class="row alt" style="top:259px">
<div class="c" style="left:0px;width:60px;border-left:none;overflow:hidden"><div class="abs" style="left:22px;top:8px"><svg width="16" height="16" viewBox="0 0 16 16" ><path d="M3.6 0.2 L8 4.6 L12.4 0.2 L15.8 3.6 L11.4 8 L15.8 12.4 L12.4 15.8 L8 11.4 L3.6 15.8 L0.2 12.4 L4.6 8 L0.2 3.6 Z" fill="#8c1a10"/>
<path d="M3.6 0.2 L8 4.6 L12.4 0.2 L15.8 3.6 L13.4 6 C9 5.4 5.5 6.4 2.4 5.8 L0.2 3.6 Z" fill="#a0342a"/></svg></div></div>
<div class="c" style="left:60px;width:70px;overflow:hidden"><div class="abs" style="left:27px;top:10px"><svg width="16" height="15" viewBox="0 0 16 15" ><rect x="0.6" y="0.6" width="13.6" height="10.6" rx="1.4" fill="#fff" stroke="#3a3a3a" stroke-width="0.9"/>
<path d="M1.2 1.2 L7.4 6.4 L13.6 1.2 M1.2 10.6 L5.6 5.2 M13.6 10.6 L9.2 5.2" stroke="#333" stroke-width="0.7" fill="none"/>
<circle cx="10.9" cy="9.8" r="4.7" fill="#6cc12e"/><circle cx="10.9" cy="9.8" r="3.3" fill="#8ed552"/>
<path d="M8 8.8 H10.8 V7.2 L14 9.8 L10.8 12.4 V10.8 H8 Z" fill="#fff"/></svg></div></div>
<div class="c" style="left:130px;width:70px;overflow:hidden"></div>
<div class="c" style="left:200px;width:70px;overflow:hidden"></div>
<div class="c" style="left:270px;width:50px;overflow:hidden"></div>
<div class="c" style="left:320px;width:50px;overflow:hidden"><div class="abs" style="left:17px;top:8px"><svg width="16" height="16" viewBox="0 0 16 16" ><circle cx="7.9" cy="7.9" r="7.1" fill="#fff" stroke="#8c8c8c" stroke-width="1.5"/>
<path d="M7.8 -0.1 C4.6 0.1 2.6 1.9 2.1 4.3 L0.3 4.1 L3 8.3 L6.1 5 L4.3 4.7 C4.7 3.3 5.9 2.2 7.8 2 Z" fill="#3cb52e"/>
<rect x="7.3" y="3.2" width="1.4" height="4.6" fill="#555"/><rect x="8.5" y="7.2" width="4.7" height="1.5" fill="#4fb6e0"/><path d="M7.7 8.5 L4.1 12" stroke="#f0b030" stroke-width="1.2"/></svg></div></div>
<div class="c" style="left:370px;width:52px;overflow:hidden"><div class="abs" style="left:18px;top:8px"><svg width="17" height="16" viewBox="0 0 17 16" ><path d="M8.2 0 C12.8 0 16.4 2.8 16.4 6.6 C16.4 9 15.2 10.6 13.4 11.7 L14.2 15.9 L10.4 13 C9.7 13.2 9 13.3 8.2 13.3 C3.6 13.3 0 10.4 0 6.6 C0 2.8 3.6 0 8.2 0 Z" fill="#1c409e"/><path d="M5.9 4.6 C5.9 1.6 10.7 1.6 10.7 4.6 C10.7 6.4 8.4 6.3 8.4 8.2" stroke="#fff" stroke-width="1.9" fill="none"/><rect x="7.5" y="9.3" width="1.9" height="1.8" fill="#fff"/></svg></div></div>
<div class="c" style="left:422px;width:150px;overflow:hidden"><div class="t" style="left:8.2px;letter-spacing:-0.34px;">188805</div></div>
<div class="c" style="left:572px;width:50px;overflow:hidden"><div class="abs" style="left:17px;top:8px"><svg width="17" height="16" viewBox="0 0 17 16" ><path d="M8.2 0 C12.8 0 16.4 2.8 16.4 6.6 C16.4 9 15.2 10.6 13.4 11.7 L14.2 15.9 L10.4 13 C9.7 13.2 9 13.3 8.2 13.3 C3.6 13.3 0 10.4 0 6.6 C0 2.8 3.6 0 8.2 0 Z" fill="#1c409e"/><rect x="7.2" y="4.8" width="2.1" height="6" fill="#fff"/><rect x="7.2" y="2" width="2.1" height="2" fill="#fff"/></svg></div></div>
<div class="c" style="left:622px;width:150px;overflow:hidden"><div class="t" style="left:8.2px;letter-spacing:-0.17px;">Translation</div></div>
<div class="c" style="left:772px;width:150px;overflow:hidden"><div class="t" style="left:12.8px;letter-spacing:-0.05px;">23/05/2024 03:06</div></div>
<div class="c" style="left:922px;width:150px;overflow:hidden"><div class="t" style="left:8.2px;letter-spacing:-0.06px;">Bulk file upload che...</div></div>
<div class="c" style="left:1072px;width:150px;overflow:hidden"></div>
<div class="c" style="left:1222px;width:150px;overflow:hidden"><div class="t" style="left:8.2px;">0</div></div>
<div class="c" style="left:1372px;width:150px;overflow:hidden"><div class="t" style="left:8.2px;letter-spacing:-0.06px;">Mr Translator</div></div>
<div class="c" style="left:1522px;width:150px;overflow:hidden"><div class="t" style="left:8.2px;">0</div></div>
<div class="c" style="left:1672px;width:150px;overflow:hidden"><div class="abs" style="left:12px;top:0"><svg width="92" height="37" viewBox="0 0 92 37" ><g stroke="#f4f4f4" stroke-width="1.25" fill="none">
<path d="M0.2 25.4 H13.4 L18.1 14.2"/><path d="M17.4 25.4 H31.3 L36 14.2"/><path d="M35.2 25.4 H58.8"/><path d="M61.8 25.4 H74.3"/><path d="M76.6 25.4 H89.2"/></g>
<rect x="74.5" y="17.1" width="1.8" height="1.9" fill="#f4f4f4"/><rect x="74.5" y="22" width="1.8" height="1.9" fill="#f4f4f4"/></svg></div></div>
<div class="c" style="left:1822px;width:150px;overflow:hidden"><div class="abs" style="left:12px;top:0"><svg width="92" height="37" viewBox="0 0 92 37" ><g stroke="#f4f4f4" stroke-width="1.25" fill="none">
<path d="M0.2 25.4 H13.4 L18.1 14.2"/><path d="M17.4 25.4 H31.3 L36 14.2"/><path d="M35.2 25.4 H58.8"/><path d="M61.8 25.4 H74.3"/><path d="M76.6 25.4 H89.2"/></g>
<rect x="74.5" y="17.1" width="1.8" height="1.9" fill="#f4f4f4"/><rect x="74.5" y="22" width="1.8" height="1.9" fill="#f4f4f4"/></svg></div></div>
</div>
<div class="row" style="top:296px">
<div class="c" style="left:0px;width:60px;border-left:none;overflow:hidden"><div class="abs" style="left:22px;top:8px"><svg width="16" height="16" viewBox="0 0 16 16" ><path d="M3.6 0.2 L8 4.6 L12.4 0.2 L15.8 3.6 L11.4 8 L15.8 12.4 L12.4 15.8 L8 11.4 L3.6 15.8 L0.2 12.4 L4.6 8 L0.2 3.6 Z" fill="#8c1a10"/>
<path d="M3.6 0.2 L8 4.6 L12.4 0.2 L15.8 3.6 L13.4 6 C9 5.4 5.5 6.4 2.4 5.8 L0.2 3.6 Z" fill="#a0342a"/></svg></div></div>
<div class="c" style="left:60px;width:70px;overflow:hidden"><div class="abs" style="left:27px;top:10px"><svg width="16" height="15" viewBox="0 0 16 15" ><rect x="0.6" y="0.6" width="13.6" height="10.6" rx="1.4" fill="#fff" stroke="#3a3a3a" stroke-width="0.9"/>
<path d="M1.2 1.2 L7.4 6.4 L13.6 1.2 M1.2 10.6 L5.6 5.2 M13.6 10.6 L9.2 5.2" stroke="#333" stroke-width="0.7" fill="none"/>
<circle cx="10.9" cy="9.8" r="4.7" fill="#6cc12e"/><circle cx="10.9" cy="9.8" r="3.3" fill="#8ed552"/>
<path d="M8 8.8 H10.8 V7.2 L14 9.8 L10.8 12.4 V10.8 H8 Z" fill="#fff"/></svg></div></div>
<div class="c" style="left:130px;width:70px;overflow:hidden"></div>
<div class="c" style="left:200px;width:70px;overflow:hidden"></div>
<div class="c" style="left:270px;width:50px;overflow:hidden"></div>
<div class="c" style="left:320px;width:50px;overflow:hidden"><div class="abs" style="left:17px;top:8px"><svg width="16" height="16" viewBox="0 0 16 16" ><circle cx="7.9" cy="7.9" r="7.1" fill="#fff" stroke="#8c8c8c" stroke-width="1.5"/>
<path d="M7.8 -0.1 C4.6 0.1 2.6 1.9 2.1 4.3 L0.3 4.1 L3 8.3 L6.1 5 L4.3 4.7 C4.7 3.3 5.9 2.2 7.8 2 Z" fill="#3cb52e"/>
<rect x="7.3" y="3.2" width="1.4" height="4.6" fill="#555"/><rect x="8.5" y="7.2" width="4.7" height="1.5" fill="#4fb6e0"/><path d="M7.7 8.5 L4.1 12" stroke="#f0b030" stroke-width="1.2"/></svg></div></div>
<div class="c" style="left:370px;width:52px;overflow:hidden"><div class="abs" style="left:18px;top:8px"><svg width="17" height="16" viewBox="0 0 17 16" ><path d="M8.2 0 C12.8 0 16.4 2.8 16.4 6.6 C16.4 9 15.2 10.6 13.4 11.7 L14.2 15.9 L10.4 13 C9.7 13.2 9 13.3 8.2 13.3 C3.6 13.3 0 10.4 0 6.6 C0 2.8 3.6 0 8.2 0 Z" fill="#1c409e"/><path d="M5.9 4.6 C5.9 1.6 10.7 1.6 10.7 4.6 C10.7 6.4 8.4 6.3 8.4 8.2" stroke="#fff" stroke-width="1.9" fill="none"/><rect x="7.5" y="9.3" width="1.9" height="1.8" fill="#fff"/></svg></div></div>
<div class="c" style="left:422px;width:150px;overflow:hidden"><div class="t" style="left:8.2px;letter-spacing:-0.34px;">188705</div></div>
<div class="c" style="left:572px;width:50px;overflow:hidden"><div class="abs" style="left:17px;top:8px"><svg width="17" height="16" viewBox="0 0 17 16" ><path d="M8.2 0 C12.8 0 16.4 2.8 16.4 6.6 C16.4 9 15.2 10.6 13.4 11.7 L14.2 15.9 L10.4 13 C9.7 13.2 9 13.3 8.2 13.3 C3.6 13.3 0 10.4 0 6.6 C0 2.8 3.6 0 8.2 0 Z" fill="#1c409e"/><rect x="7.2" y="4.8" width="2.1" height="6" fill="#fff"/><rect x="7.2" y="2" width="2.1" height="2" fill="#fff"/></svg></div></div>
<div class="c" style="left:622px;width:150px;overflow:hidden"><div class="t" style="left:8.2px;letter-spacing:-0.17px;">Translation</div></div>
<div class="c" style="left:772px;width:150px;overflow:hidden"><div class="t" style="left:12.8px;letter-spacing:-0.05px;">23/05/2024 01:25</div></div>
<div class="c" style="left:922px;width:150px;overflow:hidden"><div class="t" style="left:8.2px;letter-spacing:-0.32px;">Response Time II: T...</div></div>
<div class="c" style="left:1072px;width:150px;overflow:hidden"></div>
<div class="c" style="left:1222px;width:150px;overflow:hidden"><div class="t" style="left:8.2px;">0</div></div>
<div class="c" style="left:1372px;width:150px;overflow:hidden"><div class="t" style="left:8.2px;letter-spacing:-0.10px;">Senhor Tradutor</div></div>
<div class="c" style="left:1522px;width:150px;overflow:hidden"><div class="t" style="left:8.2px;">0</div></div>
<div class="c" style="left:1672px;width:150px;overflow:hidden"><div class="abs" style="left:12px;top:0"><svg width="92" height="37" viewBox="0 0 92 37" ><g stroke="#f4f4f4" stroke-width="1.25" fill="none">
<path d="M0.2 25.4 H13.4 L18.1 14.2"/><path d="M17.4 25.4 H31.3 L36 14.2"/><path d="M35.2 25.4 H58.8"/><path d="M61.8 25.4 H74.3"/><path d="M76.6 25.4 H89.2"/></g>
<rect x="74.5" y="17.1" width="1.8" height="1.9" fill="#f4f4f4"/><rect x="74.5" y="22" width="1.8" height="1.9" fill="#f4f4f4"/></svg></div></div>
<div class="c" style="left:1822px;width:150px;overflow:hidden"><div class="abs" style="left:12px;top:0"><svg width="92" height="37" viewBox="0 0 92 37" ><g stroke="#f4f4f4" stroke-width="1.25" fill="none">
<path d="M0.2 25.4 H13.4 L18.1 14.2"/><path d="M17.4 25.4 H31.3 L36 14.2"/><path d="M35.2 25.4 H58.8"/><path d="M61.8 25.4 H74.3"/><path d="M76.6 25.4 H89.2"/></g>
<rect x="74.5" y="17.1" width="1.8" height="1.9" fill="#f4f4f4"/><rect x="74.5" y="22" width="1.8" height="1.9" fill="#f4f4f4"/></svg></div></div>
</div>
<div class="row alt" style="top:333px">
<div class="c" style="left:0px;width:60px;border-left:none;overflow:hidden"><div class="abs" style="left:22px;top:8px"><svg width="16" height="16" viewBox="0 0 16 16" ><path d="M3.6 0.2 L8 4.6 L12.4 0.2 L15.8 3.6 L11.4 8 L15.8 12.4 L12.4 15.8 L8 11.4 L3.6 15.8 L0.2 12.4 L4.6 8 L0.2 3.6 Z" fill="#8c1a10"/>
<path d="M3.6 0.2 L8 4.6 L12.4 0.2 L15.8 3.6 L13.4 6 C9 5.4 5.5 6.4 2.4 5.8 L0.2 3.6 Z" fill="#a0342a"/></svg></div></div>
<div class="c" style="left:60px;width:70px;overflow:hidden"><div class="abs" style="left:27px;top:10px"><svg width="16" height="15" viewBox="0 0 16 15" ><rect x="0.6" y="0.6" width="13.6" height="10.6" rx="1.4" fill="#fff" stroke="#3a3a3a" stroke-width="0.9"/>
<path d="M1.2 1.2 L7.4 6.4 L13.6 1.2 M1.2 10.6 L5.6 5.2 M13.6 10.6 L9.2 5.2" stroke="#333" stroke-width="0.7" fill="none"/>
<circle cx="10.9" cy="9.8" r="4.7" fill="#6cc12e"/><circle cx="10.9" cy="9.8" r="3.3" fill="#8ed552"/>
<path d="M8 8.8 H10.8 V7.2 L14 9.8 L10.8 12.4 V10.8 H8 Z" fill="#fff"/></svg></div></div>
<div class="c" style="left:130px;width:70px;overflow:hidden"></div>
<div class="c" style="left:200px;width:70px;overflow:hidden"></div>
<div class="c" style="left:270px;width:50px;overflow:hidden"></div>
<div class="c" style="left:320px;width:50px;overflow:hidden"><div class="abs" style="left:17px;top:8px"><svg width="16" height="16" viewBox="0 0 16 16" ><circle cx="7.9" cy="7.9" r="7.1" fill="#fff" stroke="#8c8c8c" stroke-width="1.5"/>
<path d="M7.8 -0.1 C4.6 0.1 2.6 1.9 2.1 4.3 L0.3 4.1 L3 8.3 L6.1 5 L4.3 4.7 C4.7 3.3 5.9 2.2 7.8 2 Z" fill="#3cb52e"/>
<rect x="7.3" y="3.2" width="1.4" height="4.6" fill="#555"/><rect x="8.5" y="7.2" width="4.7" height="1.5" fill="#4fb6e0"/><path d="M7.7 8.5 L4.1 12" stroke="#f0b030" stroke-width="1.2"/></svg></div></div>
<div class="c" style="left:370px;width:52px;overflow:hidden"><div class="abs" style="left:18px;top:8px"><svg width="17" height="16" viewBox="0 0 17 16" ><path d="M8.2 0 C12.8 0 16.4 2.8 16.4 6.6 C16.4 9 15.2 10.6 13.4 11.7 L14.2 15.9 L10.4 13 C9.7 13.2 9 13.3 8.2 13.3 C3.6 13.3 0 10.4 0 6.6 C0 2.8 3.6 0 8.2 0 Z" fill="#1c409e"/><path d="M5.9 4.6 C5.9 1.6 10.7 1.6 10.7 4.6 C10.7 6.4 8.4 6.3 8.4 8.2" stroke="#fff" stroke-width="1.9" fill="none"/><rect x="7.5" y="9.3" width="1.9" height="1.8" fill="#fff"/></svg></div></div>
<div class="c" style="left:422px;width:150px;overflow:hidden"><div class="t" style="left:8.2px;letter-spacing:-0.34px;">188871</div></div>
<div class="c" style="left:572px;width:50px;overflow:hidden"><div class="abs" style="left:17px;top:8px"><svg width="17" height="16" viewBox="0 0 17 16" ><path d="M8.2 0 C12.8 0 16.4 2.8 16.4 6.6 C16.4 9 15.2 10.6 13.4 11.7 L14.2 15.9 L10.4 13 C9.7 13.2 9 13.3 8.2 13.3 C3.6 13.3 0 10.4 0 6.6 C0 2.8 3.6 0 8.2 0 Z" fill="#1c409e"/><rect x="7.2" y="4.8" width="2.1" height="6" fill="#fff"/><rect x="7.2" y="2" width="2.1" height="2" fill="#fff"/></svg></div></div>
<div class="c" style="left:622px;width:150px;overflow:hidden"><div class="t" style="left:8.2px;transform:scaleX(0.9167);transform-origin:0 0;">QC</div></div>
<div class="c" style="left:772px;width:150px;overflow:hidden"><div class="t" style="left:12.8px;letter-spacing:-0.05px;">23/05/2024 05:49</div></div>
<div class="c" style="left:922px;width:150px;overflow:hidden"><div class="t" style="left:8.2px;letter-spacing:-0.22px;">TK export check</div></div>
<div class="c" style="left:1072px;width:150px;overflow:hidden"></div>
<div class="c" style="left:1222px;width:150px;overflow:hidden"><div class="t" style="left:8.2px;">0</div></div>
<div class="c" style="left:1372px;width:150px;overflow:hidden"><div class="t" style="left:8.2px;letter-spacing:-0.25px;">Portuguese QCer</div></div>
<div class="c" style="left:1522px;width:150px;overflow:hidden"><div class="t" style="left:8.2px;">0</div></div>
<div class="c" style="left:1672px;width:150px;overflow:hidden"><div class="abs" style="left:12px;top:0"><svg width="92" height="37" viewBox="0 0 92 37" ><g stroke="#f4f4f4" stroke-width="1.25" fill="none">
<path d="M0.2 25.4 H13.4 L18.1 14.2"/><path d="M17.4 25.4 H31.3 L36 14.2"/><path d="M35.2 25.4 H58.8"/><path d="M61.8 25.4 H74.3"/><path d="M76.6 25.4 H89.2"/></g>
<rect x="74.5" y="17.1" width="1.8" height="1.9" fill="#f4f4f4"/><rect x="74.5" y="22" width="1.8" height="1.9" fill="#f4f4f4"/></svg></div></div>
<div class="c" style="left:1822px;width:150px;overflow:hidden"><div class="abs" style="left:12px;top:0"><svg width="92" height="37" viewBox="0 0 92 37" ><g stroke="#f4f4f4" stroke-width="1.25" fill="none">
<path d="M0.2 25.4 H13.4 L18.1 14.2"/><path d="M17.4 25.4 H31.3 L36 14.2"/><path d="M35.2 25.4 H58.8"/><path d="M61.8 25.4 H74.3"/><path d="M76.6 25.4 H89.2"/></g>
<rect x="74.5" y="17.1" width="1.8" height="1.9" fill="#f4f4f4"/><rect x="74.5" y="22" width="1.8" height="1.9" fill="#f4f4f4"/></svg></div></div>
</div>
<div class="row" style="top:370px">
<div class="c" style="left:0px;width:60px;border-left:none;overflow:hidden"><div class="abs" style="left:22px;top:8px"><svg width="16" height="16" viewBox="0 0 16 16" ><path d="M3.6 0.2 L8 4.6 L12.4 0.2 L15.8 3.6 L11.4 8 L15.8 12.4 L12.4 15.8 L8 11.4 L3.6 15.8 L0.2 12.4 L4.6 8 L0.2 3.6 Z" fill="#8c1a10"/>
<path d="M3.6 0.2 L8 4.6 L12.4 0.2 L15.8 3.6 L13.4 6 C9 5.4 5.5 6.4 2.4 5.8 L0.2 3.6 Z" fill="#a0342a"/></svg></div></div>
<div class="c" style="left:60px;width:70px;overflow:hidden"><div class="abs" style="left:27px;top:10px"><svg width="16" height="15" viewBox="0 0 16 15" ><rect x="0.6" y="0.6" width="13.6" height="10.6" rx="1.4" fill="#fff" stroke="#3a3a3a" stroke-width="0.9"/>
<path d="M1.2 1.2 L7.4 6.4 L13.6 1.2 M1.2 10.6 L5.6 5.2 M13.6 10.6 L9.2 5.2" stroke="#333" stroke-width="0.7" fill="none"/>
<circle cx="10.9" cy="9.8" r="4.7" fill="#6cc12e"/><circle cx="10.9" cy="9.8" r="3.3" fill="#8ed552"/>
<path d="M8 8.8 H10.8 V7.2 L14 9.8 L10.8 12.4 V10.8 H8 Z" fill="#fff"/></svg></div></div>
<div class="c" style="left:130px;width:70px;overflow:hidden"></div>
<div class="c" style="left:200px;width:70px;overflow:hidden"></div>
<div class="c" style="left:270px;width:50px;overflow:hidden"></div>
<div class="c" style="left:320px;width:50px;overflow:hidden"><div class="abs" style="left:17px;top:8px"><svg width="16" height="16" viewBox="0 0 16 16" ><circle cx="7.9" cy="7.9" r="7.1" fill="#fff" stroke="#8c8c8c" stroke-width="1.5"/>
<path d="M7.8 -0.1 C4.6 0.1 2.6 1.9 2.1 4.3 L0.3 4.1 L3 8.3 L6.1 5 L4.3 4.7 C4.7 3.3 5.9 2.2 7.8 2 Z" fill="#3cb52e"/>
<rect x="7.3" y="3.2" width="1.4" height="4.6" fill="#555"/><rect x="8.5" y="7.2" width="4.7" height="1.5" fill="#4fb6e0"/><path d="M7.7 8.5 L4.1 12" stroke="#f0b030" stroke-width="1.2"/></svg></div></div>
<div class="c" style="left:370px;width:52px;overflow:hidden"><div class="abs" style="left:18px;top:8px"><svg width="17" height="16" viewBox="0 0 17 16" ><path d="M8.2 0 C12.8 0 16.4 2.8 16.4 6.6 C16.4 9 15.2 10.6 13.4 11.7 L14.2 15.9 L10.4 13 C9.7 13.2 9 13.3 8.2 13.3 C3.6 13.3 0 10.4 0 6.6 C0 2.8 3.6 0 8.2 0 Z" fill="#1c409e"/><path d="M5.9 4.6 C5.9 1.6 10.7 1.6 10.7 4.6 C10.7 6.4 8.4 6.3 8.4 8.2" stroke="#fff" stroke-width="1.9" fill="none"/><rect x="7.5" y="9.3" width="1.9" height="1.8" fill="#fff"/></svg></div></div>
<div class="c" style="left:422px;width:150px;overflow:hidden"><div class="t" style="left:8.2px;letter-spacing:-0.34px;">188871</div></div>
<div class="c" style="left:572px;width:50px;overflow:hidden"><div class="abs" style="left:17px;top:8px"><svg width="17" height="16" viewBox="0 0 17 16" ><path d="M8.2 0 C12.8 0 16.4 2.8 16.4 6.6 C16.4 9 15.2 10.6 13.4 11.7 L14.2 15.9 L10.4 13 C9.7 13.2 9 13.3 8.2 13.3 C3.6 13.3 0 10.4 0 6.6 C0 2.8 3.6 0 8.2 0 Z" fill="#1c409e"/><rect x="7.2" y="4.8" width="2.1" height="6" fill="#fff"/><rect x="7.2" y="2" width="2.1" height="2" fill="#fff"/></svg></div></div>
<div class="c" style="left:622px;width:150px;overflow:hidden"><div class="t" style="left:8.2px;letter-spacing:-0.17px;">Translation</div></div>
<div class="c" style="left:772px;width:150px;overflow:hidden"><div class="t" style="left:12.8px;letter-spacing:-0.05px;">23/05/2024 05:49</div></div>
<div class="c" style="left:922px;width:150px;overflow:hidden"><div class="t" style="left:8.2px;letter-spacing:-0.22px;">TK export check</div></div>
<div class="c" style="left:1072px;width:150px;overflow:hidden"></div>
<div class="c" style="left:1222px;width:150px;overflow:hidden"><div class="t" style="left:8.2px;">0</div></div>
<div class="c" style="left:1372px;width:150px;overflow:hidden"><div class="t" style="left:8.2px;letter-spacing:-0.27px;">Portuguese Translat...</div></div>
<div class="c" style="left:1522px;width:150px;overflow:hidden"><div class="t" style="left:8.2px;">0</div></div>
<div class="c" style="left:1672px;width:150px;overflow:hidden"><div class="t" style="left:12.8px;">11/05/2023 12:00</div></div>
<div class="c" style="left:1822px;width:150px;overflow:hidden"><div class="abs" style="left:12px;top:0"><svg width="92" height="37" viewBox="0 0 92 37" ><g stroke="#f4f4f4" stroke-width="1.25" fill="none">
<path d="M0.2 25.4 H13.4 L18.1 14.2"/><path d="M17.4 25.4 H31.3 L36 14.2"/><path d="M35.2 25.4 H58.8"/><path d="M61.8 25.4 H74.3"/><path d="M76.6 25.4 H89.2"/></g>
<rect x="74.5" y="17.1" width="1.8" height="1.9" fill="#f4f4f4"/><rect x="74.5" y="22" width="1.8" height="1.9" fill="#f4f4f4"/></svg></div></div>
</div>
<div class="row alt" style="top:407px">
<div class="c" style="left:0px;width:60px;border-left:none;overflow:hidden"><div class="abs" style="left:22px;top:8px"><svg width="16" height="16" viewBox="0 0 16 16" ><path d="M3.6 0.2 L8 4.6 L12.4 0.2 L15.8 3.6 L11.4 8 L15.8 12.4 L12.4 15.8 L8 11.4 L3.6 15.8 L0.2 12.4 L4.6 8 L0.2 3.6 Z" fill="#8c1a10"/>
<path d="M3.6 0.2 L8 4.6 L12.4 0.2 L15.8 3.6 L13.4 6 C9 5.4 5.5 6.4 2.4 5.8 L0.2 3.6 Z" fill="#a0342a"/></svg></div></div>
<div class="c" style="left:60px;width:70px;overflow:hidden"><div class="abs" style="left:27px;top:10px"><svg width="16" height="15" viewBox="0 0 16 15" ><rect x="0.6" y="0.6" width="13.6" height="10.6" rx="1.4" fill="#fff" stroke="#3a3a3a" stroke-width="0.9"/>
<path d="M1.2 1.2 L7.4 6.4 L13.6 1.2 M1.2 10.6 L5.6 5.2 M13.6 10.6 L9.2 5.2" stroke="#333" stroke-width="0.7" fill="none"/>
<circle cx="10.9" cy="9.8" r="4.7" fill="#6cc12e"/><circle cx="10.9" cy="9.8" r="3.3" fill="#8ed552"/>
<path d="M8 8.8 H10.8 V7.2 L14 9.8 L10.8 12.4 V10.8 H8 Z" fill="#fff"/></svg></div></div>
<div class="c" style="left:130px;width:70px;overflow:hidden"></div>
<div class="c" style="left:200px;width:70px;overflow:hidden"></div>
<div class="c" style="left:270px;width:50px;overflow:hidden"></div>
<div class="c" style="left:320px;width:50px;overflow:hidden"><div class="abs" style="left:17px;top:8px"><svg width="16" height="16" viewBox="0 0 16 16" ><circle cx="7.9" cy="7.9" r="7.1" fill="#fff" stroke="#8c8c8c" stroke-width="1.5"/>
<path d="M7.8 -0.1 C4.6 0.1 2.6 1.9 2.1 4.3 L0.3 4.1 L3 8.3 L6.1 5 L4.3 4.7 C4.7 3.3 5.9 2.2 7.8 2 Z" fill="#3cb52e"/>
<rect x="7.3" y="3.2" width="1.4" height="4.6" fill="#555"/><rect x="8.5" y="7.2" width="4.7" height="1.5" fill="#4fb6e0"/><path d="M7.7 8.5 L4.1 12" stroke="#f0b030" stroke-width="1.2"/></svg></div></div>
<div class="c" style="left:370px;width:52px;overflow:hidden"><div class="abs" style="left:18px;top:8px"><svg width="17" height="16" viewBox="0 0 17 16" ><path d="M8.2 0 C12.8 0 16.4 2.8 16.4 6.6 C16.4 9 15.2 10.6 13.4 11.7 L14.2 15.9 L10.4 13 C9.7 13.2 9 13.3 8.2 13.3 C3.6 13.3 0 10.4 0 6.6 C0 2.8 3.6 0 8.2 0 Z" fill="#1c409e"/><path d="M5.9 4.6 C5.9 1.6 10.7 1.6 10.7 4.6 C10.7 6.4 8.4 6.3 8.4 8.2" stroke="#fff" stroke-width="1.9" fill="none"/><rect x="7.5" y="9.3" width="1.9" height="1.8" fill="#fff"/></svg></div></div>
<div class="c" style="left:422px;width:150px;overflow:hidden"><div class="t" style="left:8.2px;letter-spacing:-0.34px;">188865</div></div>
<div class="c" style="left:572px;width:50px;overflow:hidden"><div class="abs" style="left:17px;top:8px"><svg width="17" height="16" viewBox="0 0 17 16" ><path d="M8.2 0 C12.8 0 16.4 2.8 16.4 6.6 C16.4 9 15.2 10.6 13.4 11.7 L14.2 15.9 L10.4 13 C9.7 13.2 9 13.3 8.2 13.3 C3.6 13.3 0 10.4 0 6.6 C0 2.8 3.6 0 8.2 0 Z" fill="#1c409e"/><rect x="7.2" y="4.8" width="2.1" height="6" fill="#fff"/><rect x="7.2" y="2" width="2.1" height="2" fill="#fff"/></svg></div></div>
<div class="c" style="left:622px;width:150px;overflow:hidden"><div class="t" style="left:8.2px;letter-spacing:-0.17px;">Translation</div></div>
<div class="c" style="left:772px;width:150px;overflow:hidden"><div class="t" style="left:12.8px;letter-spacing:-0.05px;">23/05/2024 05:53</div></div>
<div class="c" style="left:922px;width:150px;overflow:hidden"><div class="t" style="left:8.2px;letter-spacing:-0.24px;">Order task changes...</div></div>
<div class="c" style="left:1072px;width:150px;overflow:hidden"></div>
<div class="c" style="left:1222px;width:150px;overflow:hidden"><div class="t" style="left:8.2px;">0</div></div>
<div class="c" style="left:1372px;width:150px;overflow:hidden"><div class="t" style="left:8.2px;letter-spacing:-0.10px;">Senhor Tradutor</div></div>
<div class="c" style="left:1522px;width:150px;overflow:hidden"><div class="t" style="left:8.2px;">0</div></div>
<div class="c" style="left:1672px;width:150px;overflow:hidden"><div class="t" style="left:12.8px;letter-spacing:-0.05px;">21/05/2024 16:00</div></div>
<div class="c" style="left:1822px;width:150px;overflow:hidden"><div class="abs" style="left:12px;top:0"><svg width="92" height="37" viewBox="0 0 92 37" ><g stroke="#f4f4f4" stroke-width="1.25" fill="none">
<path d="M0.2 25.4 H13.4 L18.1 14.2"/><path d="M17.4 25.4 H31.3 L36 14.2"/><path d="M35.2 25.4 H58.8"/><path d="M61.8 25.4 H74.3"/><path d="M76.6 25.4 H89.2"/></g>
<rect x="74.5" y="17.1" width="1.8" height="1.9" fill="#f4f4f4"/><rect x="74.5" y="22" width="1.8" height="1.9" fill="#f4f4f4"/></svg></div></div>
</div>
<div class="row" style="top:444px">
<div class="c" style="left:0px;width:60px;border-left:none;overflow:hidden"><div class="abs" style="left:22px;top:8px"><svg width="16" height="16" viewBox="0 0 16 16" ><path d="M3.6 0.2 L8 4.6 L12.4 0.2 L15.8 3.6 L11.4 8 L15.8 12.4 L12.4 15.8 L8 11.4 L3.6 15.8 L0.2 12.4 L4.6 8 L0.2 3.6 Z" fill="#8c1a10"/>
<path d="M3.6 0.2 L8 4.6 L12.4 0.2 L15.8 3.6 L13.4 6 C9 5.4 5.5 6.4 2.4 5.8 L0.2 3.6 Z" fill="#a0342a"/></svg></div></div>
<div class="c" style="left:60px;width:70px;overflow:hidden"><div class="abs" style="left:27px;top:10px"><svg width="16" height="15" viewBox="0 0 16 15" ><rect x="0.6" y="0.6" width="13.6" height="10.6" rx="1.4" fill="#fff" stroke="#3a3a3a" stroke-width="0.9"/>
<path d="M1.2 1.2 L7.4 6.4 L13.6 1.2 M1.2 10.6 L5.6 5.2 M13.6 10.6 L9.2 5.2" stroke="#333" stroke-width="0.7" fill="none"/>
<circle cx="10.9" cy="9.8" r="4.7" fill="#6cc12e"/><circle cx="10.9" cy="9.8" r="3.3" fill="#8ed552"/>
<path d="M8 8.8 H10.8 V7.2 L14 9.8 L10.8 12.4 V10.8 H8 Z" fill="#fff"/></svg></div></div>
<div class="c" style="left:130px;width:70px;overflow:hidden"></div>
<div class="c" style="left:200px;width:70px;overflow:hidden"></div>
<div class="c" style="left:270px;width:50px;overflow:hidden"></div>
<div class="c" style="left:320px;width:50px;overflow:hidden"><div class="abs" style="left:17px;top:8px"><svg width="16" height="16" viewBox="0 0 16 16" ><circle cx="4.1" cy="4.1" r="3.9" fill="#d4622a"/><rect x="1.8" y="3.3" width="4.6" height="1.6" fill="#f4e4d8"/>
<circle cx="12" cy="4.1" r="3.9" fill="#8cc03f"/><path d="M10 4.2 l1.4 1.4 l2.5 -2.9" stroke="#eef6dd" stroke-width="1.3" fill="none"/>
<circle cx="4.1" cy="12" r="3.9" fill="#2450c0"/><rect x="3.5" y="10.9" width="1.2" height="3.3" fill="#dfe6fa"/><rect x="3.5" y="9.3" width="1.2" height="1.1" fill="#dfe6fa"/>
<circle cx="12" cy="12" r="3.9" fill="#2450c0"/><path d="M10.7 11 C10.7 9.4 13.3 9.4 13.3 11 C13.3 12 12 12 12 13" stroke="#aebcf0" stroke-width="1.1" fill="none"/><rect x="11.5" y="13.6" width="1.1" height="1" fill="#aebcf0"/></svg></div></div>
<div class="c" style="left:370px;width:52px;overflow:hidden"><div class="abs" style="left:18px;top:8px"><svg width="17" height="16" viewBox="0 0 17 16" ><path d="M8.2 0 C12.8 0 16.4 2.8 16.4 6.6 C16.4 9 15.2 10.6 13.4 11.7 L14.2 15.9 L10.4 13 C9.7 13.2 9 13.3 8.2 13.3 C3.6 13.3 0 10.4 0 6.6 C0 2.8 3.6 0 8.2 0 Z" fill="#1c409e"/><path d="M5.9 4.6 C5.9 1.6 10.7 1.6 10.7 4.6 C10.7 6.4 8.4 6.3 8.4 8.2" stroke="#fff" stroke-width="1.9" fill="none"/><rect x="7.5" y="9.3" width="1.9" height="1.8" fill="#fff"/></svg></div></div>
<div class="c" style="left:422px;width:150px;overflow:hidden"><div class="t" style="left:8.2px;letter-spacing:-0.34px;">188868</div></div>
<div class="c" style="left:572px;width:50px;overflow:hidden"><div class="abs" style="left:17px;top:8px"><svg width="17" height="16" viewBox="0 0 17 16" ><path d="M8.2 0 C12.8 0 16.4 2.8 16.4 6.6 C16.4 9 15.2 10.6 13.4 11.7 L14.2 15.9 L10.4 13 C9.7 13.2 9 13.3 8.2 13.3 C3.6 13.3 0 10.4 0 6.6 C0 2.8 3.6 0 8.2 0 Z" fill="#1c409e"/><rect x="7.2" y="4.8" width="2.1" height="6" fill="#fff"/><rect x="7.2" y="2" width="2.1" height="2" fill="#fff"/></svg></div></div>
<div class="c" style="left:622px;width:150px;overflow:hidden"><div class="t" style="left:8.2px;letter-spacing:0.10px;">Timing</div></div>
<div class="c" style="left:772px;width:150px;overflow:hidden"><div class="t" style="left:12.8px;letter-spacing:-0.05px;">24/05/2024 07:33</div></div>
<div class="c" style="left:922px;width:150px;overflow:hidden"><div class="t" style="left:8.2px;letter-spacing:-0.24px;">Order task changes...</div></div>
<div class="c" style="left:1072px;width:150px;overflow:hidden"></div>
<div class="c" style="left:1222px;width:150px;overflow:hidden"><div class="t" style="left:8.2px;">0</div></div>
<div class="c" style="left:1372px;width:150px;overflow:hidden"><div class="t" style="left:8.2px;letter-spacing:-0.19px;">Senhora Tradutora</div></div>
<div class="c" style="left:1522px;width:150px;overflow:hidden"><div class="t" style="left:8.2px;">0</div></div>
<div class="c" style="left:1672px;width:150px;overflow:hidden"><div class="t" style="left:12.8px;letter-spacing:-0.05px;">22/05/2024 16:00</div></div>
<div class="c" style="left:1822px;width:150px;overflow:hidden"><div class="abs" style="left:12px;top:0"><svg width="92" height="37" viewBox="0 0 92 37" ><g stroke="#f4f4f4" stroke-width="1.25" fill="none">
<path d="M0.2 25.4 H13.4 L18.1 14.2"/><path d="M17.4 25.4 H31.3 L36 14.2"/><path d="M35.2 25.4 H58.8"/><path d="M61.8 25.4 H74.3"/><path d="M76.6 25.4 H89.2"/></g>
<rect x="74.5" y="17.1" width="1.8" height="1.9" fill="#f4f4f4"/><rect x="74.5" y="22" width="1.8" height="1.9" fill="#f4f4f4"/></svg></div></div>
</div>
<div class="row alt" style="top:481px">
<div class="c" style="left:0px;width:60px;border-left:none;overflow:hidden"></div>
<div class="c" style="left:60px;width:70px;overflow:hidden"></div>
<div class="c" style="left:130px;width:70px;overflow:hidden"></div>
<div class="c" style="left:200px;width:70px;overflow:hidden"></div>
<div class="c" style="left:270px;width:50px;overflow:hidden"></div>
<div class="c" style="left:320px;width:50px;overflow:hidden"></div>
<div class="c" style="left:370px;width:52px;overflow:hidden"></div>
<div class="c" style="left:422px;width:150px;overflow:hidden"></div>
<div class="c" style="left:572px;width:50px;overflow:hidden"></div>
<div class="c" style="left:622px;width:150px;overflow:hidden"></div>
<div class="c" style="left:772px;width:150px;overflow:hidden"></div>
<div class="c" style="left:922px;width:150px;overflow:hidden"></div>
<div class="c" style="left:1072px;width:150px;overflow:hidden"></div>
<div class="c" style="left:1222px;width:150px;overflow:hidden"></div>
<div class="c" style="left:1372px;width:150px;overflow:hidden"></div>
<div class="c" style="left:1522px;width:150px;overflow:hidden"></div>
<div class="c" style="left:1672px;width:150px;overflow:hidden"></div>
<div class="c" style="left:1822px;width:150px;overflow:hidden"></div>
</div>
</div>
<div class="abs" style="left:1901px;top:106px;width:17px;height:489px;background:#f1f1f1;border:1px solid #fff;border-bottom:none"></div>
<div class="abs" style="left:1903px;top:123px;width:13px;height:300px;background:#c1c1c1"></div>
<div class="abs" style="left:1906.1px;top:113px"><svg width="7" height="4" viewBox="0 0 7 4" ><path d="M0 4 H7 L3.5 0 Z" fill="#a3a3a3"/></svg></div>
<div class="abs" style="left:1906.1px;top:584px"><svg width="7" height="4" viewBox="0 0 7 4" ><path d="M0 0 H7 L3.5 4 Z" fill="#505050"/></svg></div>
<div class="abs" style="left:0;top:595px;width:1901px;height:17px;background:#f1f1f1;border-top:1px solid #fff;border-bottom:1px solid #fff"></div>
<div class="abs" style="left:1901px;top:595px;width:17px;height:17px;background:#dcdcdc"></div>
<div class="abs" style="left:17px;top:597px;width:1078px;height:13px;background:#c1c1c1"></div>
<div class="abs" style="left:5.9px;top:600px"><svg width="4.2" height="7" viewBox="0 0 4.2 7" ><path d='M4.2 0 V7 L0 3.5 Z' fill='#a3a3a3'/></svg></div>
<div class="abs" style="left:1891px;top:600px"><svg width="4.2" height="7" viewBox="0 0 4.2 7" ><path d='M0 0 V7 L4.2 3.5 Z' fill='#505050'/></svg></div>
</div>
<div class="abs" style="left:1px;top:798px;width:1918px;height:39px;background:linear-gradient(#2a2a2a 0%,#424242 48%,#3b3b3b 100%)"></div>
<div class="abs" style="left:7.5px;top:806.8px;"><svg width="18" height="18" viewBox="0 0 18 18" ><rect x="0.5" y="0.3" width="15.6" height="1.5" fill="#4fb6e0"/><path d="M0.9 2.6 H15.7 L10.2 8.6 V12.8 H6.4 V8.6 Z" fill="#8b8b90"/><path d="M6.4 12.8 H9 V15.2 H7.6 L6.4 14 Z" fill="#f4c13f"/>
<circle cx="12.8" cy="13.3" r="3.7" fill="#8cc03f"/><path d="M12.8 11.2 V15.4 M10.7 13.3 H14.9" stroke="#fff" stroke-width="1.3"/></svg></div>
<div class="t" style="left:32.5px;top:813px;font-size:12px;letter-spacing:-0.03px;text-shadow:0 0 1px rgba(255,255,255,.6);-webkit-text-stroke:0.12px #fff;">Range options</div>
<div class="abs" style="left:117px;top:805px;width:100px;height:27px;border-radius:4px;background:#f2a93b;border:1px solid #b03a1c"></div>
<div class="abs" style="left:126.1px;top:808px;"><svg width="16" height="16" viewBox="0 0 16 16" ><rect x="7" y="0" width="2" height="3.2" fill="#a8a49c" transform="rotate(0 8 8)"/><rect x="7" y="0" width="2" height="3.2" fill="#a8a49c" transform="rotate(30 8 8)"/><rect x="7" y="0" width="2" height="3.2" fill="#a8a49c" transform="rotate(60 8 8)"/><rect x="7" y="0" width="2" height="3.2" fill="#a8a49c" transform="rotate(90 8 8)"/><rect x="7" y="0" width="2" height="3.2" fill="#a8a49c" transform="rotate(120 8 8)"/><rect x="7" y="0" width="2" height="3.2" fill="#a8a49c" transform="rotate(150 8 8)"/><rect x="7" y="0" width="2" height="3.2" fill="#a8a49c" transform="rotate(180 8 8)"/><rect x="7" y="0" width="2" height="3.2" fill="#a8a49c" transform="rotate(210 8 8)"/><rect x="7" y="0" width="2" height="3.2" fill="#a8a49c" transform="rotate(240 8 8)"/><rect x="7" y="0" width="2" height="3.2" fill="#a8a49c" transform="rotate(270 8 8)"/><rect x="7" y="0" width="2" height="3.2" fill="#a8a49c" transform="rotate(300 8 8)"/><rect x="7" y="0" width="2" height="3.2" fill="#a8a49c" transform="rotate(330 8 8)"/><circle cx="8" cy="8" r="6.1" fill="#a8a49c"/><circle cx="8" cy="8" r="4.3" fill="#f2a93b"/><rect x="7.5" y="3.4" width="1" height="4.6" fill="#a8a49c" transform="rotate(0 8 8)"/><rect x="7.5" y="3.4" width="1" height="4.6" fill="#a8a49c" transform="rotate(60 8 8)"/><rect x="7.5" y="3.4" width="1" height="4.6" fill="#a8a49c" transform="rotate(120 8 8)"/><rect x="7.5" y="3.4" width="1" height="4.6" fill="#a8a49c" transform="rotate(180 8 8)"/><rect x="7.5" y="3.4" width="1" height="4.6" fill="#a8a49c" transform="rotate(240 8 8)"/><rect x="7.5" y="3.4" width="1" height="4.6" fill="#a8a49c" transform="rotate(300 8 8)"/><circle cx="8" cy="8" r="1.3" fill="#a8a49c"/></svg></div>
<div class="t" style="left:148.4px;top:814px;font-size:12px;font-weight:bold;letter-spacing:-0.06px;color:#000;">Grid layout</div>
<div class="abs" style="left:236px;top:807px;"><svg width="16" height="16" viewBox="0 0 16 16" ><circle cx="8" cy="8" r="8" fill="#d4622a"/><rect x="3.2" y="6.4" width="9.6" height="3" rx="0.8" fill="#fff"/></svg></div>
<div class="t" style="left:258px;top:813px;font-size:12px;letter-spacing:-0.09px;text-shadow:0 0 1px rgba(255,255,255,.6);-webkit-text-stroke:0.12px #fff;">Show history</div>
<div class="abs" style="left:1px;top:837px;width:1918px;height:36px;background:linear-gradient(#2a2a2a 0%,#414141 50%,#3a3a3a 100%)"></div>
<div class="abs" style="left:13px;top:851px;"><svg width="10" height="10" viewBox="0 0 10 10" ><rect x="0.6" y="0.8" width="1.6" height="8.4" fill="#ddd"/><path d="M9 0.8 V9.2 L3 5 Z" fill="#ddd"/></svg></div>
<div class="abs" style="left:43px;top:851px;"><svg width="10" height="10" viewBox="0 0 10 10" ><path d="M8 0.8 V9.2 L2 5 Z" fill="#ddd"/></svg></div>
<div class="abs" style="left:63px;top:841px;width:30px;height:30px;background:#626262"></div>
<div class="t" style="left:74px;top:849px;font-size:14px;">1</div>
<div class="t" style="left:104px;top:849px;font-size:14px;">2</div>
<div class="t" style="left:134px;top:849px;font-size:14px;">3</div>
<div class="t" style="left:164px;top:849px;font-size:14px;">4</div>
<div class="t" style="left:194px;top:849px;font-size:14px;">5</div>
<div class="t" style="left:224px;top:849px;font-size:14px;letter-spacing:-1px;">...</div>
<div class="abs" style="left:253px;top:851px;"><svg width="10" height="10" viewBox="0 0 10 10" ><path d="M2 0.8 V9.2 L8 5 Z" fill="#fff"/></svg></div>
<div class="abs" style="left:283px;top:851px;"><svg width="10" height="10" viewBox="0 0 10 10" ><rect x="7.8" y="0.8" width="1.6" height="8.4" fill="#fff"/><path d="M1 0.8 V9.2 L7 5 Z" fill="#fff"/></svg></div>
<div class="t" style="left:317.5px;top:850px;font-size:12px;transform:scaleX(0.9099);transform-origin:0 0;">Page</div>
<div class="abs" style="left:351px;top:842px;width:68px;height:28px;border-radius:3px;background:#fff"></div>
<div class="t" style="left:359px;top:849px;font-size:14px;color:#333;">1</div>
<div class="t" style="left:426.75px;top:850px;font-size:12px;letter-spacing:0.14px;">of 74</div>
<div class="abs" style="left:469px;top:842px;width:68px;height:28px;border-radius:3px;background:#fff;overflow:hidden"><div class="abs" style="left:43px;top:0;width:25px;height:28px;background:linear-gradient(#3a3a3a,#2c2c2c)"></div></div>
<div class="t" style="left:477px;top:849px;font-size:14px;color:#333;">20</div>
<div class="abs" style="left:520px;top:853px;"><svg width="8" height="5" viewBox="0 0 8 5" ><path d="M0 0 H8 L4.0 5 Z" fill="#fff"/></svg></div>
<div class="t" style="left:545px;top:850px;font-size:12px;">items per page</div>
<div class="t" style="left:1691.6px;top:850px;font-size:12px;">1 - 20 of 1461 items</div>
<div class="abs" style="left:1811.2px;top:843.3px;width:25.6px;height:25.4px;border-radius:9.5px;background:#272625"></div>
<div class="abs" style="left:1815px;top:849px;"><svg width="18" height="14" viewBox="0 0 18 14" ><rect x="7.3" y="0" width="3.4" height="14" fill="#fff"/><path d="M0.6 7.65 L4.6 5 V10.3 Z M17.4 7.65 L13.4 5 V10.3 Z" fill="#fff"/><rect x="4" y="7" width="3.4" height="1.3" fill="#fff"/><rect x="10.6" y="7" width="3.4" height="1.3" fill="#fff"/></svg></div>
<div class="abs" style="left:1851.2px;top:843.3px;width:25.6px;height:25.4px;border-radius:9.5px;background:#272625"></div>
<div class="abs" style="left:1854.5px;top:847.5px;"><svg width="19" height="16" viewBox="0 0 19 16" ><path d="M3.6 2.6 H17 L11.4 8.4 V13.6 L8.6 15.6 V8.4 Z" fill="#fff"/><path d="M6.4 0.2 L18 10.8" stroke="#272625" stroke-width="3.4"/><path d="M7.3 1 L17.6 10.4" stroke="#fff" stroke-width="1.5"/></svg></div>
<div class="abs" style="left:1891.2px;top:843.3px;width:25.6px;height:25.4px;border-radius:9.5px;background:#272625"></div>
<div class="abs" style="left:1896px;top:847.4px;"><svg width="16" height="16" viewBox="0 0 16 16" ><path d="M12.6 5.2 A5.7 5.7 0 1 1 8 3.3" fill="none" stroke="#fff" stroke-width="2"/><path d="M7.6 0 L13.2 2.6 L9.6 6.4 Z" fill="#fff"/></svg></div>
<div class="t" style="left:837.2px;top:934.2px;font-size:10px;letter-spacing:-0.08px;text-shadow:0 0 1px rgba(255,255,255,.6);-webkit-text-stroke:0.25px currentColor;">Copyright © 2012 <span style="color:#8a8a8a"><i>O</i><span style="color:#f0c040">O</span><span style="color:#4fb6e0">O</span>NA.NET</span> ltd. All rights reserved.</div>
</body></html>
